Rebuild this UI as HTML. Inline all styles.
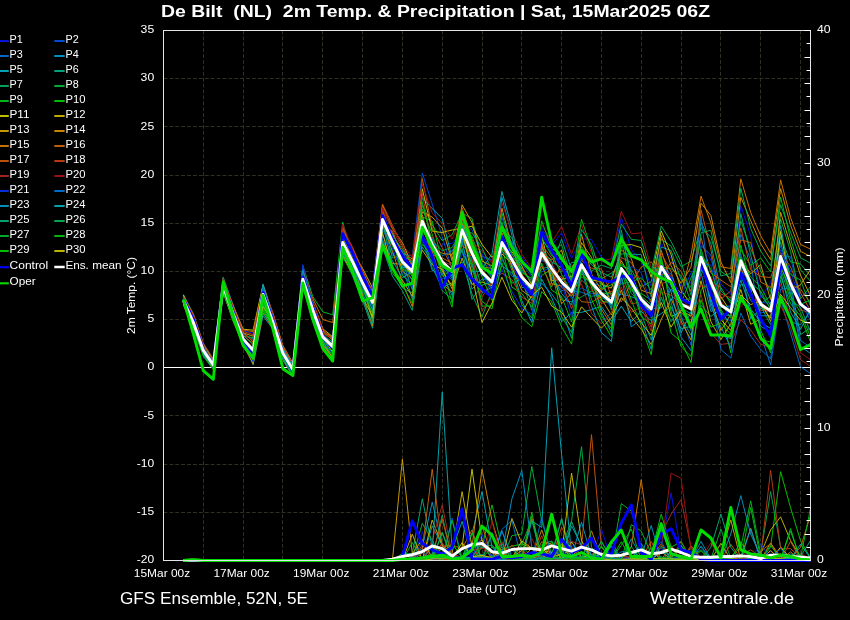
<!DOCTYPE html>
<html><head><meta charset="utf-8"><title>chart</title><style>html,body{margin:0;padding:0;background:#000;}svg{display:block}text{font-family:"Liberation Sans",sans-serif;fill:#fff}</style></head><body><div style="will-change:transform;width:850px;height:620px">
<svg width="850" height="620" viewBox="0 0 850 620">
<rect width="850" height="620" fill="#000"/>
<g stroke="#303022" stroke-width="1" stroke-dasharray="3.9,2" fill="none"><line x1="203.5" y1="30.5" x2="203.5" y2="560.5"/><line x1="243.5" y1="30.5" x2="243.5" y2="560.5"/><line x1="282.5" y1="30.5" x2="282.5" y2="560.5"/><line x1="322.5" y1="30.5" x2="322.5" y2="560.5"/><line x1="362.5" y1="30.5" x2="362.5" y2="560.5"/><line x1="402.5" y1="30.5" x2="402.5" y2="560.5"/><line x1="442.5" y1="30.5" x2="442.5" y2="560.5"/><line x1="482.5" y1="30.5" x2="482.5" y2="560.5"/><line x1="521.5" y1="30.5" x2="521.5" y2="560.5"/><line x1="561.5" y1="30.5" x2="561.5" y2="560.5"/><line x1="601.5" y1="30.5" x2="601.5" y2="560.5"/><line x1="641.5" y1="30.5" x2="641.5" y2="560.5"/><line x1="681.5" y1="30.5" x2="681.5" y2="560.5"/><line x1="720.5" y1="30.5" x2="720.5" y2="560.5"/><line x1="760.5" y1="30.5" x2="760.5" y2="560.5"/><line x1="800.5" y1="30.5" x2="800.5" y2="560.5"/><line x1="163.5" y1="512.5" x2="810.5" y2="512.5"/><line x1="163.5" y1="464.5" x2="810.5" y2="464.5"/><line x1="163.5" y1="415.5" x2="810.5" y2="415.5"/><line x1="163.5" y1="319.5" x2="810.5" y2="319.5"/><line x1="163.5" y1="271.5" x2="810.5" y2="271.5"/><line x1="163.5" y1="223.5" x2="810.5" y2="223.5"/><line x1="163.5" y1="175.5" x2="810.5" y2="175.5"/><line x1="163.5" y1="126.5" x2="810.5" y2="126.5"/><line x1="163.5" y1="78.5" x2="810.5" y2="78.5"/></g>
<clipPath id="c"><rect x="163" y="30" width="648" height="532"/></clipPath>
<g clip-path="url(#c)" fill="none" stroke-linejoin="round" stroke-linecap="butt">
<polyline points="183.4,560.5 193.4,560.5 203.3,560.5 213.3,560.5 223.2,560.5 233.2,560.5 243.1,560.5 253.1,560.5 263.0,560.5 273.0,560.5 282.9,560.5 292.9,560.5 302.8,560.5 312.8,560.5 322.8,560.5 332.7,560.5 342.7,560.5 352.6,560.5 362.6,560.5 372.5,560.5 382.5,560.5 392.4,560.5 402.4,560.5 412.3,560.5 422.3,531.7 432.2,560.2 442.2,546.3 452.1,557.9 462.1,556.6 472.0,559.0 482.0,558.3 492.0,559.0 501.9,557.6 511.9,560.0 521.8,560.2 531.8,559.5 541.7,555.5 551.7,560.4 561.6,559.5 571.6,544.7 581.5,556.9 591.5,558.4 601.4,528.9 611.4,560.4 621.3,559.7 631.3,557.9 641.2,557.0 651.2,560.3 661.2,547.2 671.1,492.9 681.1,553.9 691.0,559.7 701.0,559.7 710.9,560.3 720.9,560.2 730.8,559.7 740.8,558.5 750.7,558.8 760.7,560.1 770.6,559.0 780.6,560.3 790.5,558.9 800.5,560.3 810.5,559.0" stroke="#0a14e6" stroke-width="0.95"/>
<polyline points="183.4,560.5 193.4,560.5 203.3,560.5 213.3,560.5 223.2,560.5 233.2,560.5 243.1,560.5 253.1,560.5 263.0,560.5 273.0,560.5 282.9,560.5 292.9,560.5 302.8,560.5 312.8,560.5 322.8,560.5 332.7,560.5 342.7,560.5 352.6,560.5 362.6,560.5 372.5,560.5 382.5,560.5 392.4,560.5 402.4,560.5 412.3,560.5 422.3,540.5 432.2,558.0 442.2,559.5 452.1,518.1 462.1,558.2 472.0,552.4 482.0,556.7 492.0,559.5 501.9,530.8 511.9,558.9 521.8,559.5 531.8,557.2 541.7,559.4 551.7,558.8 561.6,560.3 571.6,558.3 581.5,558.9 591.5,557.2 601.4,554.0 611.4,559.7 621.3,559.6 631.3,558.8 641.2,555.5 651.2,560.1 661.2,548.0 671.1,557.1 681.1,557.6 691.0,560.4 701.0,560.1 710.9,558.8 720.9,559.1 730.8,559.1 740.8,559.0 750.7,559.1 760.7,559.8 770.6,559.2 780.6,559.5 790.5,559.5 800.5,559.8 810.5,558.8" stroke="#0050dc" stroke-width="0.95"/>
<polyline points="183.4,560.5 193.4,560.5 203.3,560.5 213.3,560.5 223.2,560.5 233.2,560.5 243.1,560.5 253.1,560.5 263.0,560.5 273.0,560.5 282.9,560.5 292.9,560.5 302.8,560.5 312.8,560.5 322.8,560.5 332.7,560.5 342.7,560.5 352.6,560.5 362.6,560.5 372.5,560.5 382.5,560.5 392.4,560.5 402.4,560.5 412.3,560.5 422.3,559.8 432.2,543.6 442.2,559.5 452.1,553.5 462.1,560.5 472.0,557.3 482.0,559.2 492.0,557.5 501.9,529.4 511.9,520.5 521.8,560.3 531.8,558.4 541.7,557.6 551.7,551.3 561.6,560.5 571.6,558.2 581.5,557.3 591.5,558.0 601.4,558.4 611.4,558.9 621.3,560.2 631.3,560.4 641.2,560.0 651.2,551.8 661.2,541.6 671.1,558.8 681.1,559.7 691.0,558.6 701.0,559.2 710.9,560.3 720.9,558.9 730.8,560.2 740.8,559.9 750.7,560.0 760.7,558.9 770.6,550.8 780.6,559.6 790.5,559.8 800.5,560.4 810.5,558.8" stroke="#0070d0" stroke-width="0.95"/>
<polyline points="183.4,560.5 193.4,560.5 203.3,560.5 213.3,560.5 223.2,560.5 233.2,560.5 243.1,560.5 253.1,560.5 263.0,560.5 273.0,560.5 282.9,560.5 292.9,560.5 302.8,560.5 312.8,560.5 322.8,560.5 332.7,560.5 342.7,560.5 352.6,560.5 362.6,560.5 372.5,560.5 382.5,560.5 392.4,560.5 402.4,560.5 412.3,560.5 422.3,547.2 432.2,502.2 442.2,544.6 452.1,555.5 462.1,559.6 472.0,556.9 482.0,557.2 492.0,559.4 501.9,530.9 511.9,556.7 521.8,557.4 531.8,519.0 541.7,558.2 551.7,559.9 561.6,558.9 571.6,554.1 581.5,559.3 591.5,557.8 601.4,558.4 611.4,546.5 621.3,560.4 631.3,538.7 641.2,557.7 651.2,558.3 661.2,560.2 671.1,559.0 681.1,559.4 691.0,559.9 701.0,541.4 710.9,559.0 720.9,559.3 730.8,534.0 740.8,495.6 750.7,534.0 760.7,556.5 770.6,559.2 780.6,559.3 790.5,560.2 800.5,559.6 810.5,559.7" stroke="#0096c8" stroke-width="0.95"/>
<polyline points="183.4,560.5 193.4,560.5 203.3,560.5 213.3,560.5 223.2,560.5 233.2,560.5 243.1,560.5 253.1,560.5 263.0,560.5 273.0,560.5 282.9,560.5 292.9,560.5 302.8,560.5 312.8,560.5 322.8,560.5 332.7,560.5 342.7,560.5 352.6,560.5 362.6,560.5 372.5,560.5 382.5,560.5 392.4,560.5 402.4,560.5 412.3,560.5 422.3,560.5 432.2,525.8 442.2,545.5 452.1,556.8 462.1,557.7 472.0,534.0 482.0,491.6 492.0,547.2 501.9,557.2 511.9,549.1 521.8,559.6 531.8,521.0 541.7,527.4 551.7,347.8 561.6,454.5 571.6,553.9 581.5,560.1 591.5,557.6 601.4,541.7 611.4,558.2 621.3,557.2 631.3,557.9 641.2,556.7 651.2,554.5 661.2,529.5 671.1,554.9 681.1,556.6 691.0,559.4 701.0,558.4 710.9,559.2 720.9,559.3 730.8,557.4 740.8,559.2 750.7,558.8 760.7,559.4 770.6,559.2 780.6,560.1 790.5,559.8 800.5,553.8 810.5,559.6" stroke="#00aabe" stroke-width="0.95"/>
<polyline points="183.4,560.5 193.4,560.5 203.3,560.5 213.3,560.5 223.2,560.5 233.2,560.5 243.1,560.5 253.1,560.5 263.0,560.5 273.0,560.5 282.9,560.5 292.9,560.5 302.8,560.5 312.8,560.5 322.8,560.5 332.7,560.5 342.7,560.5 352.6,560.5 362.6,560.5 372.5,560.5 382.5,560.5 392.4,560.5 402.4,553.4 412.3,553.9 422.3,498.8 432.2,547.2 442.2,556.7 452.1,557.7 462.1,557.5 472.0,541.6 482.0,558.4 492.0,559.7 501.9,543.4 511.9,560.2 521.8,558.1 531.8,556.8 541.7,544.8 551.7,541.0 561.6,559.3 571.6,521.4 581.5,547.1 591.5,555.3 601.4,555.6 611.4,540.8 621.3,560.2 631.3,558.4 641.2,559.9 651.2,560.4 661.2,559.7 671.1,551.9 681.1,559.0 691.0,560.5 701.0,546.1 710.9,559.4 720.9,559.7 730.8,558.6 740.8,559.9 750.7,560.1 760.7,560.3 770.6,559.0 780.6,560.4 790.5,553.9 800.5,556.5 810.5,540.6" stroke="#00aa82" stroke-width="0.95"/>
<polyline points="183.4,560.5 193.4,560.5 203.3,560.5 213.3,560.5 223.2,560.5 233.2,560.5 243.1,560.5 253.1,560.5 263.0,560.5 273.0,560.5 282.9,560.5 292.9,560.5 302.8,560.5 312.8,560.5 322.8,560.5 332.7,560.5 342.7,560.5 352.6,560.5 362.6,560.5 372.5,560.5 382.5,560.5 392.4,560.5 402.4,560.1 412.3,560.5 422.3,560.5 432.2,558.7 442.2,515.0 452.1,559.3 462.1,556.9 472.0,548.3 482.0,556.9 492.0,558.4 501.9,547.0 511.9,557.3 521.8,558.6 531.8,558.2 541.7,557.4 551.7,559.7 561.6,557.6 571.6,557.9 581.5,558.4 591.5,554.8 601.4,559.9 611.4,558.9 621.3,559.7 631.3,557.2 641.2,560.0 651.2,547.7 661.2,560.4 671.1,559.4 681.1,559.0 691.0,557.7 701.0,558.7 710.9,559.8 720.9,556.9 730.8,559.5 740.8,560.0 750.7,559.4 760.7,553.9 770.6,491.6 780.6,547.2 790.5,558.8 800.5,558.8 810.5,559.9" stroke="#00aa5a" stroke-width="0.95"/>
<polyline points="183.4,560.5 193.4,560.5 203.3,560.5 213.3,560.5 223.2,560.5 233.2,560.5 243.1,560.5 253.1,560.5 263.0,560.5 273.0,560.5 282.9,560.5 292.9,560.5 302.8,560.5 312.8,560.5 322.8,560.5 332.7,560.5 342.7,560.5 352.6,560.5 362.6,560.5 372.5,560.5 382.5,560.5 392.4,560.5 402.4,560.5 412.3,558.6 422.3,523.3 432.2,540.2 442.2,559.3 452.1,556.7 462.1,558.3 472.0,560.4 482.0,559.1 492.0,559.2 501.9,559.7 511.9,535.6 521.8,534.0 531.8,466.4 541.7,520.8 551.7,553.9 561.6,518.9 571.6,559.2 581.5,560.3 591.5,550.0 601.4,557.2 611.4,558.8 621.3,545.5 631.3,529.0 641.2,560.2 651.2,560.1 661.2,559.8 671.1,558.6 681.1,559.6 691.0,558.7 701.0,559.6 710.9,559.0 720.9,529.1 730.8,558.9 740.8,560.0 750.7,559.4 760.7,559.2 770.6,558.5 780.6,559.3 790.5,558.7 800.5,560.1 810.5,559.4" stroke="#00b43c" stroke-width="0.95"/>
<polyline points="183.4,560.5 193.4,560.5 203.3,560.5 213.3,560.5 223.2,560.5 233.2,560.5 243.1,560.5 253.1,560.5 263.0,560.5 273.0,560.5 282.9,560.5 292.9,560.5 302.8,560.5 312.8,560.5 322.8,560.5 332.7,560.5 342.7,560.5 352.6,560.5 362.6,560.5 372.5,560.5 382.5,560.5 392.4,560.5 402.4,560.5 412.3,560.5 422.3,560.5 432.2,559.7 442.2,554.2 452.1,543.9 462.1,557.1 472.0,560.2 482.0,547.2 492.0,504.9 501.9,547.2 511.9,557.1 521.8,557.0 531.8,557.3 541.7,549.9 551.7,559.2 561.6,557.1 571.6,548.2 581.5,557.2 591.5,559.6 601.4,546.0 611.4,559.0 621.3,559.9 631.3,560.4 641.2,560.3 651.2,558.4 661.2,560.2 671.1,559.4 681.1,560.1 691.0,547.6 701.0,560.1 710.9,558.8 720.9,558.6 730.8,556.6 740.8,547.2 750.7,500.9 760.7,553.9 770.6,558.6 780.6,559.8 790.5,559.7 800.5,558.9 810.5,560.1" stroke="#00be1e" stroke-width="0.95"/>
<polyline points="183.4,560.5 193.4,560.5 203.3,560.5 213.3,560.5 223.2,560.5 233.2,560.5 243.1,560.5 253.1,560.5 263.0,560.5 273.0,560.5 282.9,560.5 292.9,560.5 302.8,560.5 312.8,560.5 322.8,560.5 332.7,560.5 342.7,560.5 352.6,560.5 362.6,560.5 372.5,560.5 382.5,560.5 392.4,560.5 402.4,560.5 412.3,560.5 422.3,559.8 432.2,560.2 442.2,533.1 452.1,559.9 462.1,559.4 472.0,559.8 482.0,558.2 492.0,546.9 501.9,549.6 511.9,546.1 521.8,544.1 531.8,558.8 541.7,558.9 551.7,541.6 561.6,559.2 571.6,557.2 581.5,560.3 591.5,558.0 601.4,560.1 611.4,557.6 621.3,558.9 631.3,560.4 641.2,560.0 651.2,558.7 661.2,558.6 671.1,558.6 681.1,559.5 691.0,558.7 701.0,559.4 710.9,559.0 720.9,560.1 730.8,559.8 740.8,557.1 750.7,559.5 760.7,560.2 770.6,547.2 780.6,471.7 790.5,507.5 800.5,540.6 810.5,557.9" stroke="#00c800" stroke-width="0.95"/>
<polyline points="183.4,560.5 193.4,560.5 203.3,560.5 213.3,560.5 223.2,560.5 233.2,560.5 243.1,560.5 253.1,560.5 263.0,560.5 273.0,560.5 282.9,560.5 292.9,560.5 302.8,560.5 312.8,560.5 322.8,560.5 332.7,560.5 342.7,560.5 352.6,560.5 362.6,560.5 372.5,560.5 382.5,560.5 392.4,560.5 402.4,560.5 412.3,560.5 422.3,560.2 432.2,546.1 442.2,557.4 452.1,557.6 462.1,547.2 472.0,469.1 482.0,540.6 492.0,552.8 501.9,558.0 511.9,557.4 521.8,550.4 531.8,558.1 541.7,554.9 551.7,559.6 561.6,560.1 571.6,541.9 581.5,556.6 591.5,556.6 601.4,558.9 611.4,559.5 621.3,559.6 631.3,557.7 641.2,546.9 651.2,559.7 661.2,551.8 671.1,559.3 681.1,559.8 691.0,553.0 701.0,558.8 710.9,560.0 720.9,559.8 730.8,558.8 740.8,559.8 750.7,559.7 760.7,560.3 770.6,560.0 780.6,547.1 790.5,558.6 800.5,558.9 810.5,560.2" stroke="#c8c800" stroke-width="0.95"/>
<polyline points="183.4,560.5 193.4,560.5 203.3,560.5 213.3,560.5 223.2,560.5 233.2,560.5 243.1,560.5 253.1,560.5 263.0,560.5 273.0,560.5 282.9,560.5 292.9,560.5 302.8,560.5 312.8,560.5 322.8,560.5 332.7,560.5 342.7,560.5 352.6,560.5 362.6,560.5 372.5,560.5 382.5,560.5 392.4,560.5 402.4,560.5 412.3,534.1 422.3,560.5 432.2,520.0 442.2,545.1 452.1,553.9 462.1,491.6 472.0,547.2 482.0,540.0 492.0,557.4 501.9,559.9 511.9,518.5 521.8,543.4 531.8,548.8 541.7,560.1 551.7,545.2 561.6,559.2 571.6,559.2 581.5,560.3 591.5,558.2 601.4,556.9 611.4,559.5 621.3,559.4 631.3,559.2 641.2,559.3 651.2,559.6 661.2,558.2 671.1,559.7 681.1,558.1 691.0,559.1 701.0,557.9 710.9,560.0 720.9,543.3 730.8,559.5 740.8,560.2 750.7,559.3 760.7,553.9 770.6,530.0 780.6,516.8 790.5,540.6 800.5,556.5 810.5,559.3" stroke="#c8b400" stroke-width="0.95"/>
<polyline points="183.4,560.5 193.4,560.5 203.3,560.5 213.3,560.5 223.2,560.5 233.2,560.5 243.1,560.5 253.1,560.5 263.0,560.5 273.0,560.5 282.9,560.5 292.9,560.5 302.8,560.5 312.8,560.5 322.8,560.5 332.7,560.5 342.7,560.5 352.6,560.5 362.6,560.5 372.5,560.5 382.5,560.5 392.4,560.5 402.4,459.1 412.3,553.9 422.3,539.3 432.2,557.9 442.2,558.2 452.1,557.4 462.1,557.5 472.0,558.2 482.0,556.8 492.0,557.8 501.9,559.4 511.9,558.5 521.8,560.3 531.8,547.6 541.7,550.2 551.7,552.5 561.6,544.4 571.6,560.0 581.5,556.5 591.5,559.0 601.4,559.5 611.4,558.3 621.3,559.5 631.3,559.9 641.2,557.3 651.2,560.3 661.2,559.4 671.1,559.5 681.1,559.6 691.0,560.0 701.0,560.0 710.9,560.0 720.9,555.2 730.8,519.8 740.8,560.3 750.7,559.2 760.7,559.6 770.6,550.6 780.6,559.8 790.5,559.6 800.5,559.1 810.5,558.9" stroke="#d2a000" stroke-width="0.95"/>
<polyline points="183.4,560.5 193.4,560.5 203.3,560.5 213.3,560.5 223.2,560.5 233.2,560.5 243.1,560.5 253.1,560.5 263.0,560.5 273.0,560.5 282.9,560.5 292.9,560.5 302.8,560.5 312.8,560.5 322.8,560.5 332.7,560.5 342.7,560.5 352.6,560.5 362.6,560.5 372.5,560.5 382.5,560.5 392.4,560.5 402.4,560.5 412.3,560.5 422.3,560.5 432.2,554.4 442.2,560.5 452.1,559.6 462.1,559.3 472.0,547.2 482.0,469.1 492.0,520.8 501.9,553.9 511.9,556.9 521.8,559.0 531.8,557.5 541.7,529.9 551.7,557.8 561.6,541.0 571.6,556.9 581.5,545.3 591.5,554.2 601.4,552.7 611.4,558.7 621.3,559.1 631.3,558.2 641.2,560.0 651.2,559.8 661.2,522.5 671.1,558.5 681.1,559.7 691.0,557.3 701.0,559.5 710.9,560.5 720.9,558.7 730.8,559.2 740.8,557.5 750.7,528.3 760.7,559.9 770.6,542.9 780.6,557.3 790.5,558.9 800.5,559.6 810.5,560.5" stroke="#d28c00" stroke-width="0.95"/>
<polyline points="183.4,560.5 193.4,560.5 203.3,560.5 213.3,560.5 223.2,560.5 233.2,560.5 243.1,560.5 253.1,560.5 263.0,560.5 273.0,560.5 282.9,560.5 292.9,560.5 302.8,560.5 312.8,560.5 322.8,560.5 332.7,560.5 342.7,560.5 352.6,560.5 362.6,560.5 372.5,560.5 382.5,560.5 392.4,560.5 402.4,560.5 412.3,560.5 422.3,552.8 432.2,557.6 442.2,559.5 452.1,558.1 462.1,559.9 472.0,559.6 482.0,525.1 492.0,557.7 501.9,549.8 511.9,559.4 521.8,556.7 531.8,560.1 541.7,541.8 551.7,544.0 561.6,560.1 571.6,560.2 581.5,559.8 591.5,530.8 601.4,557.6 611.4,558.7 621.3,559.5 631.3,547.2 641.2,479.7 651.2,549.9 661.2,560.1 671.1,559.2 681.1,560.4 691.0,559.8 701.0,559.8 710.9,559.9 720.9,559.7 730.8,559.8 740.8,559.0 750.7,559.2 760.7,559.9 770.6,559.3 780.6,560.3 790.5,551.9 800.5,559.9 810.5,560.4" stroke="#d27800" stroke-width="0.95"/>
<polyline points="183.4,560.5 193.4,560.5 203.3,560.5 213.3,560.5 223.2,560.5 233.2,560.5 243.1,560.5 253.1,560.5 263.0,560.5 273.0,560.5 282.9,560.5 292.9,560.5 302.8,560.5 312.8,560.5 322.8,560.5 332.7,560.5 342.7,560.5 352.6,560.5 362.6,560.5 372.5,560.5 382.5,560.5 392.4,560.5 402.4,560.5 412.3,560.5 422.3,549.9 432.2,469.1 442.2,547.2 452.1,545.0 462.1,548.7 472.0,529.9 482.0,559.9 492.0,557.8 501.9,559.0 511.9,559.3 521.8,559.3 531.8,559.3 541.7,558.2 551.7,557.9 561.6,559.4 571.6,559.2 581.5,556.8 591.5,559.5 601.4,560.1 611.4,557.2 621.3,559.3 631.3,560.1 641.2,558.4 651.2,556.8 661.2,543.9 671.1,559.8 681.1,559.0 691.0,558.9 701.0,559.7 710.9,560.5 720.9,558.5 730.8,559.7 740.8,558.8 750.7,558.7 760.7,551.2 770.6,543.7 780.6,559.3 790.5,557.9 800.5,547.2 810.5,515.5" stroke="#c86408" stroke-width="0.95"/>
<polyline points="183.4,560.5 193.4,560.5 203.3,560.5 213.3,560.5 223.2,560.5 233.2,560.5 243.1,560.5 253.1,560.5 263.0,560.5 273.0,560.5 282.9,560.5 292.9,560.5 302.8,560.5 312.8,560.5 322.8,560.5 332.7,560.5 342.7,560.5 352.6,560.5 362.6,560.5 372.5,560.5 382.5,560.5 392.4,560.5 402.4,560.5 412.3,556.6 422.3,560.5 432.2,556.7 442.2,518.9 452.1,558.1 462.1,557.3 472.0,549.1 482.0,558.7 492.0,556.9 501.9,556.7 511.9,559.6 521.8,557.4 531.8,516.2 541.7,558.1 551.7,557.9 561.6,544.8 571.6,552.8 581.5,547.2 591.5,434.6 601.4,547.2 611.4,558.7 621.3,556.7 631.3,556.7 641.2,558.5 651.2,541.6 661.2,559.8 671.1,545.8 681.1,560.1 691.0,545.7 701.0,558.5 710.9,558.5 720.9,559.7 730.8,544.2 740.8,558.8 750.7,557.3 760.7,559.7 770.6,560.3 780.6,559.7 790.5,541.5 800.5,559.4 810.5,558.8" stroke="#c8560c" stroke-width="0.95"/>
<polyline points="183.4,560.5 193.4,560.5 203.3,560.5 213.3,560.5 223.2,560.5 233.2,560.5 243.1,560.5 253.1,560.5 263.0,560.5 273.0,560.5 282.9,560.5 292.9,560.5 302.8,560.5 312.8,560.5 322.8,560.5 332.7,560.5 342.7,560.5 352.6,560.5 362.6,560.5 372.5,560.5 382.5,560.5 392.4,560.5 402.4,560.5 412.3,560.5 422.3,544.6 432.2,560.3 442.2,542.5 452.1,556.8 462.1,557.3 472.0,551.0 482.0,548.0 492.0,550.2 501.9,558.4 511.9,544.9 521.8,556.6 531.8,560.2 541.7,535.7 551.7,559.0 561.6,527.3 571.6,547.0 581.5,558.0 591.5,558.6 601.4,556.8 611.4,559.1 621.3,559.6 631.3,558.4 641.2,558.7 651.2,560.2 661.2,558.8 671.1,559.5 681.1,541.4 691.0,559.2 701.0,559.8 710.9,559.2 720.9,560.2 730.8,560.2 740.8,554.7 750.7,549.9 760.7,556.5 770.6,470.4 780.6,548.6 790.5,548.6 800.5,557.9 810.5,559.7" stroke="#be3c14" stroke-width="0.95"/>
<polyline points="183.4,560.5 193.4,560.5 203.3,560.5 213.3,560.5 223.2,560.5 233.2,560.5 243.1,560.5 253.1,560.5 263.0,560.5 273.0,560.5 282.9,560.5 292.9,560.5 302.8,560.5 312.8,560.5 322.8,560.5 332.7,560.5 342.7,560.5 352.6,560.5 362.6,560.5 372.5,560.5 382.5,560.5 392.4,560.5 402.4,560.5 412.3,560.5 422.3,560.5 432.2,540.6 442.2,504.9 452.1,553.9 462.1,557.4 472.0,558.1 482.0,545.2 492.0,558.4 501.9,541.7 511.9,557.4 521.8,559.8 531.8,556.6 541.7,557.0 551.7,560.5 561.6,545.3 571.6,541.4 581.5,544.8 591.5,560.0 601.4,558.3 611.4,555.4 621.3,560.5 631.3,558.6 641.2,558.8 651.2,559.8 661.2,534.0 671.1,514.1 681.1,499.6 691.0,547.2 701.0,558.8 710.9,559.5 720.9,560.5 730.8,560.1 740.8,559.6 750.7,558.6 760.7,558.9 770.6,559.6 780.6,560.1 790.5,559.2 800.5,557.7 810.5,559.8" stroke="#aa281e" stroke-width="0.95"/>
<polyline points="183.4,560.5 193.4,560.5 203.3,560.5 213.3,560.5 223.2,560.5 233.2,560.5 243.1,560.5 253.1,560.5 263.0,560.5 273.0,560.5 282.9,560.5 292.9,560.5 302.8,560.5 312.8,560.5 322.8,560.5 332.7,560.5 342.7,560.5 352.6,560.5 362.6,560.5 372.5,560.5 382.5,560.5 392.4,560.5 402.4,560.5 412.3,560.5 422.3,560.5 432.2,559.6 442.2,558.7 452.1,560.3 462.1,559.8 472.0,557.5 482.0,559.4 492.0,521.7 501.9,560.4 511.9,559.5 521.8,558.5 531.8,538.3 541.7,558.7 551.7,559.8 561.6,558.4 571.6,558.8 581.5,560.4 591.5,556.9 601.4,557.9 611.4,559.0 621.3,558.0 631.3,556.7 641.2,559.0 651.2,559.2 661.2,547.2 671.1,473.1 681.1,478.4 691.0,549.9 701.0,558.8 710.9,542.9 720.9,558.7 730.8,559.7 740.8,558.9 750.7,559.5 760.7,560.4 770.6,558.4 780.6,557.5 790.5,560.3 800.5,553.5 810.5,558.7" stroke="#a01414" stroke-width="0.95"/>
<polyline points="183.4,560.5 193.4,560.5 203.3,560.5 213.3,560.5 223.2,560.5 233.2,560.5 243.1,560.5 253.1,560.5 263.0,560.5 273.0,560.5 282.9,560.5 292.9,560.5 302.8,560.5 312.8,560.5 322.8,560.5 332.7,560.5 342.7,560.5 352.6,560.5 362.6,560.5 372.5,560.5 382.5,560.5 392.4,560.5 402.4,560.5 412.3,560.5 422.3,551.7 432.2,559.2 442.2,558.8 452.1,557.3 462.1,556.8 472.0,557.2 482.0,534.4 492.0,558.2 501.9,559.6 511.9,557.8 521.8,559.5 531.8,559.6 541.7,557.6 551.7,558.4 561.6,551.1 571.6,557.7 581.5,557.2 591.5,560.1 601.4,559.5 611.4,559.4 621.3,557.6 631.3,558.5 641.2,554.8 651.2,557.0 661.2,560.4 671.1,558.6 681.1,559.4 691.0,557.6 701.0,560.1 710.9,559.0 720.9,560.3 730.8,560.1 740.8,559.4 750.7,559.4 760.7,543.6 770.6,559.3 780.6,559.9 790.5,558.7 800.5,559.9 810.5,559.8" stroke="#0032e6" stroke-width="0.95"/>
<polyline points="183.4,560.5 193.4,560.5 203.3,560.5 213.3,560.5 223.2,560.5 233.2,560.5 243.1,560.5 253.1,560.5 263.0,560.5 273.0,560.5 282.9,560.5 292.9,560.5 302.8,560.5 312.8,560.5 322.8,560.5 332.7,560.5 342.7,560.5 352.6,560.5 362.6,560.5 372.5,560.5 382.5,560.5 392.4,560.5 402.4,560.5 412.3,560.5 422.3,560.5 432.2,558.2 442.2,557.2 452.1,556.9 462.1,559.9 472.0,558.6 482.0,560.2 492.0,532.4 501.9,557.0 511.9,556.8 521.8,559.8 531.8,560.1 541.7,517.1 551.7,557.6 561.6,545.3 571.6,556.9 581.5,557.3 591.5,557.3 601.4,556.7 611.4,557.5 621.3,559.9 631.3,558.4 641.2,558.9 651.2,559.9 661.2,558.6 671.1,558.7 681.1,558.8 691.0,557.0 701.0,547.0 710.9,559.7 720.9,560.5 730.8,559.9 740.8,560.3 750.7,559.7 760.7,559.0 770.6,558.6 780.6,548.5 790.5,560.0 800.5,560.3 810.5,559.5" stroke="#0070d0" stroke-width="0.95"/>
<polyline points="183.4,560.5 193.4,560.5 203.3,560.5 213.3,560.5 223.2,560.5 233.2,560.5 243.1,560.5 253.1,560.5 263.0,560.5 273.0,560.5 282.9,560.5 292.9,560.5 302.8,560.5 312.8,560.5 322.8,560.5 332.7,560.5 342.7,560.5 352.6,560.5 362.6,560.5 372.5,560.5 382.5,560.5 392.4,560.5 402.4,560.5 412.3,560.5 422.3,560.5 432.2,559.1 442.2,553.4 452.1,557.7 462.1,557.6 472.0,557.4 482.0,557.3 492.0,557.2 501.9,553.9 511.9,498.8 521.8,470.4 531.8,547.2 541.7,559.9 551.7,557.6 561.6,559.2 571.6,557.4 581.5,522.0 591.5,556.7 601.4,557.1 611.4,558.9 621.3,551.7 631.3,551.9 641.2,557.0 651.2,525.5 661.2,560.0 671.1,560.3 681.1,559.1 691.0,556.8 701.0,560.4 710.9,559.0 720.9,559.4 730.8,559.8 740.8,559.4 750.7,528.9 760.7,559.3 770.6,558.8 780.6,559.4 790.5,556.8 800.5,558.9 810.5,558.8" stroke="#0096c8" stroke-width="0.95"/>
<polyline points="183.4,560.5 193.4,560.5 203.3,560.5 213.3,560.5 223.2,560.5 233.2,560.5 243.1,560.5 253.1,560.5 263.0,560.5 273.0,560.5 282.9,560.5 292.9,560.5 302.8,560.5 312.8,560.5 322.8,560.5 332.7,560.5 342.7,560.5 352.6,560.5 362.6,560.5 372.5,560.5 382.5,560.5 392.4,560.5 402.4,560.5 412.3,557.1 422.3,560.5 432.2,553.9 442.2,392.2 452.1,549.9 462.1,521.3 472.0,557.2 482.0,554.5 492.0,559.2 501.9,559.9 511.9,557.8 521.8,557.0 531.8,560.1 541.7,558.3 551.7,558.7 561.6,558.9 571.6,525.9 581.5,545.5 591.5,558.6 601.4,560.5 611.4,559.5 621.3,559.6 631.3,558.9 641.2,558.9 651.2,559.0 661.2,551.1 671.1,558.9 681.1,558.9 691.0,558.9 701.0,556.9 710.9,560.1 720.9,558.7 730.8,559.9 740.8,559.8 750.7,558.6 760.7,558.7 770.6,559.4 780.6,559.8 790.5,559.5 800.5,544.2 810.5,558.3" stroke="#00aab4" stroke-width="0.95"/>
<polyline points="183.4,560.5 193.4,560.5 203.3,560.5 213.3,560.5 223.2,560.5 233.2,560.5 243.1,560.5 253.1,560.5 263.0,560.5 273.0,560.5 282.9,560.5 292.9,560.5 302.8,560.5 312.8,560.5 322.8,560.5 332.7,560.5 342.7,560.5 352.6,560.5 362.6,560.5 372.5,560.5 382.5,560.5 392.4,560.5 402.4,560.5 412.3,560.5 422.3,560.5 432.2,559.3 442.2,531.9 452.1,557.4 462.1,558.5 472.0,543.8 482.0,547.7 492.0,544.8 501.9,557.8 511.9,558.2 521.8,558.8 531.8,560.0 541.7,557.6 551.7,556.6 561.6,518.3 571.6,557.3 581.5,557.7 591.5,537.3 601.4,557.4 611.4,545.6 621.3,560.3 631.3,560.5 641.2,543.4 651.2,560.4 661.2,559.5 671.1,559.3 681.1,559.3 691.0,558.6 701.0,559.2 710.9,547.2 720.9,514.1 730.8,547.2 740.8,560.4 750.7,558.6 760.7,560.3 770.6,559.4 780.6,558.4 790.5,558.7 800.5,558.7 810.5,559.4" stroke="#00aa78" stroke-width="0.95"/>
<polyline points="183.4,560.5 193.4,560.5 203.3,560.5 213.3,560.5 223.2,560.5 233.2,560.5 243.1,560.5 253.1,560.5 263.0,560.5 273.0,560.5 282.9,560.5 292.9,560.5 302.8,560.5 312.8,560.5 322.8,560.5 332.7,560.5 342.7,560.5 352.6,560.5 362.6,560.5 372.5,560.5 382.5,560.5 392.4,560.5 402.4,560.5 412.3,560.5 422.3,560.5 432.2,557.9 442.2,557.1 452.1,558.1 462.1,558.2 472.0,558.2 482.0,542.2 492.0,559.4 501.9,556.1 511.9,559.8 521.8,544.3 531.8,519.7 541.7,559.9 551.7,559.0 561.6,547.2 571.6,520.8 581.5,446.6 591.5,547.2 601.4,557.6 611.4,559.1 621.3,558.7 631.3,546.5 641.2,559.6 651.2,556.8 661.2,546.3 671.1,558.7 681.1,545.7 691.0,557.5 701.0,549.8 710.9,558.7 720.9,558.8 730.8,560.0 740.8,559.5 750.7,559.2 760.7,560.0 770.6,559.6 780.6,558.6 790.5,559.9 800.5,554.6 810.5,559.1" stroke="#00af50" stroke-width="0.95"/>
<polyline points="183.4,560.5 193.4,560.5 203.3,560.5 213.3,560.5 223.2,560.5 233.2,560.5 243.1,560.5 253.1,560.5 263.0,560.5 273.0,560.5 282.9,560.5 292.9,560.5 302.8,560.5 312.8,560.5 322.8,560.5 332.7,560.5 342.7,560.5 352.6,560.5 362.6,560.5 372.5,560.5 382.5,560.5 392.4,560.5 402.4,560.5 412.3,560.5 422.3,560.5 432.2,556.8 442.2,560.2 452.1,520.2 462.1,560.3 472.0,557.7 482.0,560.4 492.0,533.5 501.9,558.2 511.9,559.3 521.8,559.5 531.8,558.5 541.7,551.4 551.7,560.2 561.6,553.1 571.6,558.6 581.5,556.5 591.5,560.4 601.4,541.0 611.4,560.3 621.3,503.6 631.3,511.1 641.2,546.7 651.2,558.9 661.2,558.7 671.1,557.0 681.1,545.4 691.0,560.5 701.0,559.1 710.9,558.8 720.9,559.7 730.8,558.7 740.8,560.1 750.7,560.3 760.7,560.3 770.6,545.3 780.6,559.7 790.5,531.1 800.5,559.1 810.5,559.1" stroke="#00b432" stroke-width="0.95"/>
<polyline points="183.4,560.5 193.4,560.5 203.3,560.5 213.3,560.5 223.2,560.5 233.2,560.5 243.1,560.5 253.1,560.5 263.0,560.5 273.0,560.5 282.9,560.5 292.9,560.5 302.8,560.5 312.8,560.5 322.8,560.5 332.7,560.5 342.7,560.5 352.6,560.5 362.6,560.5 372.5,560.5 382.5,560.5 392.4,560.5 402.4,560.5 412.3,542.6 422.3,560.5 432.2,556.6 442.2,558.0 452.1,543.4 462.1,557.7 472.0,532.9 482.0,560.5 492.0,556.8 501.9,557.4 511.9,559.0 521.8,558.7 531.8,512.3 541.7,559.2 551.7,557.7 561.6,558.4 571.6,559.4 581.5,559.0 591.5,559.2 601.4,558.6 611.4,553.6 621.3,560.3 631.3,524.7 641.2,531.1 651.2,553.9 661.2,514.1 671.1,547.2 681.1,541.6 691.0,559.4 701.0,550.8 710.9,560.4 720.9,559.1 730.8,559.1 740.8,559.9 750.7,507.3 760.7,558.6 770.6,558.6 780.6,560.3 790.5,560.5 800.5,558.1 810.5,508.4" stroke="#00be14" stroke-width="0.95"/>
<polyline points="183.4,560.5 193.4,560.5 203.3,560.5 213.3,560.5 223.2,560.5 233.2,560.5 243.1,560.5 253.1,560.5 263.0,560.5 273.0,560.5 282.9,560.5 292.9,560.5 302.8,560.5 312.8,560.5 322.8,560.5 332.7,560.5 342.7,560.5 352.6,560.5 362.6,560.5 372.5,560.5 382.5,560.5 392.4,560.5 402.4,560.5 412.3,560.5 422.3,557.2 432.2,554.3 442.2,549.1 452.1,560.4 462.1,559.2 472.0,559.0 482.0,560.5 492.0,557.7 501.9,557.4 511.9,557.0 521.8,557.7 531.8,556.6 541.7,551.9 551.7,558.9 561.6,542.3 571.6,559.4 581.5,557.6 591.5,559.9 601.4,547.0 611.4,558.2 621.3,541.8 631.3,558.6 641.2,558.4 651.2,560.2 661.2,556.9 671.1,559.4 681.1,558.8 691.0,558.4 701.0,559.2 710.9,559.1 720.9,560.2 730.8,559.1 740.8,541.7 750.7,559.5 760.7,558.8 770.6,560.4 780.6,560.2 790.5,528.5 800.5,560.2 810.5,556.7" stroke="#00c800" stroke-width="0.95"/>
<polyline points="183.4,560.5 193.4,560.5 203.3,560.5 213.3,560.5 223.2,560.5 233.2,560.5 243.1,560.5 253.1,560.5 263.0,560.5 273.0,560.5 282.9,560.5 292.9,560.5 302.8,560.5 312.8,560.5 322.8,560.5 332.7,560.5 342.7,560.5 352.6,560.5 362.6,560.5 372.5,560.5 382.5,560.5 392.4,560.5 402.4,560.5 412.3,560.5 422.3,560.5 432.2,559.0 442.2,558.7 452.1,559.1 462.1,542.6 472.0,556.9 482.0,555.4 492.0,557.6 501.9,557.5 511.9,558.4 521.8,540.9 531.8,548.1 541.7,548.0 551.7,557.2 561.6,553.9 571.6,473.1 581.5,540.6 591.5,559.1 601.4,558.9 611.4,559.9 621.3,560.1 631.3,558.8 641.2,559.2 651.2,558.6 661.2,558.8 671.1,558.9 681.1,559.3 691.0,558.6 701.0,559.7 710.9,559.9 720.9,560.2 730.8,559.0 740.8,559.5 750.7,560.3 760.7,558.2 770.6,558.7 780.6,558.6 790.5,560.2 800.5,560.4 810.5,559.2" stroke="#c8be00" stroke-width="0.95"/>
<polyline points="183.4,560.5 193.4,560.5 203.3,560.5 213.3,560.5 223.2,560.5 233.2,560.5 243.1,560.5 253.1,560.5 263.0,560.5 273.0,560.5 282.9,560.5 292.9,560.5 302.8,560.5 312.8,560.5 322.8,560.5 332.7,560.5 342.7,560.5 352.6,560.5 362.6,560.5 372.5,560.5 382.5,560.5 392.4,560.5 402.4,556.5 412.3,520.8 422.3,543.3 432.2,549.9 442.2,553.9 452.1,547.2 462.1,508.8 472.0,559.2 482.0,559.2 492.0,559.2 501.9,556.5 511.9,557.9 521.8,556.5 531.8,552.5 541.7,553.9 551.7,556.5 561.6,539.3 571.6,552.5 581.5,548.6 591.5,538.0 601.4,556.5 611.4,553.9 621.3,523.4 631.3,504.9 641.2,552.5 651.2,559.2 661.2,534.0 671.1,528.7 681.1,549.9 691.0,552.5 701.0,559.2 710.9,560.5 720.9,560.5 730.8,560.5 740.8,560.5 750.7,560.5 760.7,560.5 770.6,560.5 780.6,560.5 790.5,560.5 800.5,560.5 810.5,560.5" stroke="#0000ff" stroke-width="2.9"/>
<polyline points="183.4,560.5 193.4,560.2 203.3,560.4 213.3,560.5 223.2,560.5 233.2,560.5 243.1,560.5 253.1,560.5 263.0,560.5 273.0,560.5 282.9,560.5 292.9,560.5 302.8,560.5 312.8,560.5 322.8,560.5 332.7,560.5 342.7,560.5 352.6,560.5 362.6,560.5 372.5,560.5 382.5,560.5 392.4,559.2 402.4,556.5 412.3,554.7 422.3,551.6 432.2,545.9 442.2,548.6 452.1,556.1 462.1,548.6 472.0,544.6 482.0,543.5 492.0,551.6 501.9,553.2 511.9,549.5 521.8,548.6 531.8,548.6 541.7,549.9 551.7,545.9 561.6,548.6 571.6,551.2 581.5,547.2 591.5,549.9 601.4,554.5 611.4,555.9 621.3,555.2 631.3,552.5 641.2,549.9 651.2,553.9 661.2,552.5 671.1,549.2 681.1,552.5 691.0,556.5 701.0,557.2 710.9,557.2 720.9,556.5 730.8,556.5 740.8,555.9 750.7,556.5 760.7,558.5 770.6,555.2 780.6,555.2 790.5,556.5 800.5,557.2 810.5,557.9" stroke="#ffffff" stroke-width="2.9"/>
<polyline points="183.4,560.5 193.4,559.6 203.3,560.5 213.3,560.5 223.2,560.5 233.2,560.5 243.1,560.5 253.1,560.5 263.0,560.5 273.0,560.5 282.9,560.5 292.9,560.5 302.8,560.5 312.8,560.5 322.8,560.5 332.7,560.5 342.7,560.5 352.6,560.5 362.6,560.5 372.5,560.5 382.5,560.5 392.4,560.5 402.4,559.2 412.3,559.2 422.3,557.9 432.2,556.5 442.2,555.2 452.1,559.2 462.1,557.9 472.0,549.9 482.0,526.0 492.0,535.3 501.9,556.5 511.9,556.5 521.8,555.2 531.8,556.5 541.7,552.5 551.7,514.1 561.6,555.2 571.6,556.5 581.5,552.5 591.5,557.9 601.4,559.2 611.4,542.0 621.3,530.0 631.3,556.5 641.2,556.5 651.2,556.5 661.2,523.8 671.1,553.9 681.1,556.5 691.0,559.2 701.0,530.0 710.9,538.0 720.9,557.9 730.8,507.5 740.8,549.9 750.7,553.9 760.7,555.2 770.6,557.9 780.6,555.2 790.5,556.5 800.5,559.2 810.5,559.8" stroke="#00dc00" stroke-width="2.9"/>
<line x1="162.5" y1="367.5" x2="810.5" y2="367.5" stroke="#fff" stroke-width="1.2"/>
<polyline points="183.4,299.8 193.4,317.7 203.3,342.7 213.3,359.5 223.2,289.6 233.2,310.8 243.1,330.7 253.1,333.2 263.0,290.9 273.0,317.1 282.9,347.9 292.9,364.0 302.8,277.0 312.8,310.2 322.8,333.6 332.7,343.4 342.7,243.1 352.6,256.0 362.6,272.5 372.5,290.5 382.5,216.4 392.4,239.3 402.4,260.1 412.3,269.3 422.3,220.3 432.2,252.9 442.2,244.3 452.1,243.5 462.1,231.6 472.0,250.0 482.0,253.5 492.0,272.9 501.9,237.9 511.9,255.5 521.8,256.7 531.8,270.7 541.7,228.0 551.7,245.5 561.6,232.9 571.6,258.4 581.5,238.5 591.5,239.6 601.4,257.0 611.4,263.8 621.3,217.7 631.3,249.5 641.2,260.9 651.2,286.0 661.2,243.2 671.1,258.6 681.1,287.1 691.0,282.7 701.0,241.8 710.9,260.3 720.9,284.0 730.8,294.4 740.8,205.6 750.7,235.7 760.7,298.1 770.6,282.7 780.6,246.0 790.5,283.6 800.5,296.0 810.5,291.5" stroke="#0a14e6" stroke-width="0.95"/>
<polyline points="183.4,301.0 193.4,321.2 203.3,351.6 213.3,368.3 223.2,290.6 233.2,319.2 243.1,344.1 253.1,352.5 263.0,288.6 273.0,318.5 282.9,358.0 292.9,375.4 302.8,286.5 312.8,318.1 322.8,342.3 332.7,353.1 342.7,249.3 352.6,268.6 362.6,288.6 372.5,307.3 382.5,219.6 392.4,232.5 402.4,254.1 412.3,256.0 422.3,173.1 432.2,204.0 442.2,236.7 452.1,269.3 462.1,219.9 472.0,229.7 482.0,256.2 492.0,260.3 501.9,217.6 511.9,244.4 521.8,263.8 531.8,276.7 541.7,260.5 551.7,265.0 561.6,282.2 571.6,298.8 581.5,287.9 591.5,293.6 601.4,294.4 611.4,307.6 621.3,273.7 631.3,288.1 641.2,309.1 651.2,308.0 661.2,271.3 671.1,286.6 681.1,315.0 691.0,345.1 701.0,252.0 710.9,284.6 720.9,316.5 730.8,320.8 740.8,253.5 750.7,293.6 760.7,312.9 770.6,311.1 780.6,254.9 790.5,256.8 800.5,302.9 810.5,320.3" stroke="#0050dc" stroke-width="0.95"/>
<polyline points="183.4,301.6 193.4,321.8 203.3,344.5 213.3,362.1 223.2,285.1 233.2,310.2 243.1,336.8 253.1,349.9 263.0,296.3 273.0,326.2 282.9,355.6 292.9,370.7 302.8,285.2 312.8,314.6 322.8,344.4 332.7,355.0 342.7,254.2 352.6,271.0 362.6,281.0 372.5,302.1 382.5,234.8 392.4,255.3 402.4,259.1 412.3,281.5 422.3,235.4 432.2,249.4 442.2,267.3 452.1,280.5 462.1,242.8 472.0,279.8 482.0,272.5 492.0,288.9 501.9,259.4 511.9,276.2 521.8,277.3 531.8,293.1 541.7,251.5 551.7,278.1 561.6,290.6 571.6,289.8 581.5,271.2 591.5,281.9 601.4,286.5 611.4,298.4 621.3,270.4 631.3,282.2 641.2,297.9 651.2,310.0 661.2,265.7 671.1,281.2 681.1,306.3 691.0,330.6 701.0,245.7 710.9,255.2 720.9,306.1 730.8,311.0 740.8,234.1 750.7,260.4 760.7,334.7 770.6,364.9 780.6,299.6 790.5,333.1 800.5,366.8 810.5,373.6" stroke="#0070d0" stroke-width="0.95"/>
<polyline points="183.4,295.8 193.4,316.4 203.3,348.3 213.3,360.8 223.2,277.8 233.2,305.1 243.1,333.5 253.1,339.2 263.0,286.3 273.0,316.4 282.9,351.2 292.9,368.3 302.8,269.0 312.8,304.6 322.8,334.9 332.7,342.6 342.7,226.1 352.6,259.0 362.6,292.6 372.5,304.5 382.5,215.4 392.4,238.4 402.4,265.7 412.3,299.6 422.3,238.0 432.2,270.4 442.2,273.4 452.1,295.5 462.1,240.3 472.0,289.0 482.0,279.2 492.0,279.5 501.9,197.3 511.9,235.1 521.8,287.5 531.8,287.4 541.7,252.4 551.7,268.0 561.6,280.8 571.6,262.4 581.5,262.4 591.5,281.1 601.4,291.7 611.4,302.1 621.3,293.9 631.3,296.6 641.2,300.9 651.2,308.8 661.2,307.8 671.1,289.0 681.1,302.0 691.0,310.1 701.0,273.0 710.9,311.5 720.9,307.4 730.8,305.9 740.8,266.1 750.7,279.9 760.7,315.8 770.6,315.7 780.6,280.2 790.5,322.0 800.5,324.6 810.5,311.7" stroke="#0096c8" stroke-width="0.95"/>
<polyline points="183.4,295.4 193.4,320.1 203.3,350.9 213.3,365.9 223.2,281.0 233.2,312.6 243.1,340.7 253.1,364.9 263.0,315.7 273.0,329.2 282.9,358.5 292.9,373.9 302.8,276.1 312.8,310.7 322.8,340.3 332.7,359.0 342.7,231.3 352.6,263.0 362.6,294.0 372.5,312.6 382.5,214.4 392.4,252.8 402.4,267.4 412.3,266.4 422.3,197.8 432.2,208.6 442.2,218.4 452.1,257.9 462.1,251.4 472.0,271.8 482.0,271.0 492.0,282.6 501.9,245.6 511.9,265.4 521.8,300.6 531.8,322.4 541.7,279.1 551.7,297.7 561.6,321.7 571.6,312.8 581.5,312.3 591.5,309.7 601.4,306.3 611.4,321.3 621.3,306.1 631.3,321.7 641.2,311.4 651.2,320.7 661.2,313.5 671.1,306.9 681.1,328.7 691.0,326.4 701.0,257.6 710.9,302.6 720.9,335.0 730.8,338.6 740.8,263.8 750.7,318.9 760.7,308.2 770.6,312.1 780.6,225.6 790.5,280.1 800.5,305.5 810.5,312.1" stroke="#00aabe" stroke-width="0.95"/>
<polyline points="183.4,300.4 193.4,325.3 203.3,355.3 213.3,366.9 223.2,288.2 233.2,318.6 243.1,343.1 253.1,362.7 263.0,297.6 273.0,323.0 282.9,355.2 292.9,374.4 302.8,279.3 312.8,316.7 322.8,346.6 332.7,360.1 342.7,253.0 352.6,276.2 362.6,300.3 372.5,328.3 382.5,247.3 392.4,276.2 402.4,290.7 412.3,310.4 422.3,246.9 432.2,262.0 442.2,290.7 452.1,299.1 462.1,230.6 472.0,255.4 482.0,274.9 492.0,284.4 501.9,242.6 511.9,259.7 521.8,276.7 531.8,287.7 541.7,268.6 551.7,266.2 561.6,239.0 571.6,269.9 581.5,249.9 591.5,264.9 601.4,272.4 611.4,277.2 621.3,253.9 631.3,254.2 641.2,254.5 651.2,296.9 661.2,246.9 671.1,250.6 681.1,279.7 691.0,287.2 701.0,222.1 710.9,243.6 720.9,291.0 730.8,300.8 740.8,213.5 750.7,254.9 760.7,294.8 770.6,308.0 780.6,241.7 790.5,283.2 800.5,334.7 810.5,327.6" stroke="#00aa82" stroke-width="0.95"/>
<polyline points="183.4,294.5 193.4,313.8 203.3,343.9 213.3,361.2 223.2,277.2 233.2,307.1 243.1,337.5 253.1,351.6 263.0,293.0 273.0,321.1 282.9,354.7 292.9,373.4 302.8,280.9 312.8,312.0 322.8,343.0 332.7,346.9 342.7,248.2 352.6,263.7 362.6,289.9 372.5,301.0 382.5,210.8 392.4,240.9 402.4,261.6 412.3,270.1 422.3,226.9 432.2,245.0 442.2,259.6 452.1,272.2 462.1,261.8 472.0,294.1 482.0,316.7 492.0,290.8 501.9,256.5 511.9,283.2 521.8,279.2 531.8,310.3 541.7,256.5 551.7,271.9 561.6,300.1 571.6,301.8 581.5,296.8 591.5,291.1 601.4,297.1 611.4,304.2 621.3,268.3 631.3,293.5 641.2,303.4 651.2,309.1 661.2,263.0 671.1,278.4 681.1,318.0 691.0,335.1 701.0,305.1 710.9,316.4 720.9,309.1 730.8,327.0 740.8,284.5 750.7,286.1 760.7,303.9 770.6,296.1 780.6,236.9 790.5,261.9 800.5,263.9 810.5,275.7" stroke="#00aa5a" stroke-width="0.95"/>
<polyline points="183.4,300.2 193.4,319.5 203.3,350.2 213.3,363.7 223.2,291.1 233.2,316.5 243.1,336.2 253.1,337.7 263.0,291.6 273.0,319.8 282.9,352.7 292.9,367.8 302.8,274.1 312.8,307.3 322.8,332.9 332.7,339.3 342.7,237.3 352.6,252.6 362.6,276.1 372.5,294.2 382.5,219.2 392.4,258.0 402.4,255.5 412.3,261.6 422.3,205.6 432.2,224.7 442.2,240.6 452.1,234.7 462.1,213.1 472.0,218.4 482.0,258.8 492.0,274.9 501.9,225.9 511.9,238.4 521.8,259.2 531.8,274.8 541.7,240.1 551.7,251.0 561.6,244.6 571.6,279.4 581.5,246.4 591.5,261.3 601.4,278.8 611.4,273.0 621.3,265.6 631.3,269.7 641.2,286.6 651.2,281.7 661.2,239.3 671.1,246.2 681.1,266.6 691.0,261.2 701.0,227.6 710.9,237.2 720.9,271.4 730.8,278.2 740.8,220.9 750.7,248.9 760.7,270.8 770.6,292.1 780.6,219.1 790.5,251.3 800.5,298.8 810.5,286.6" stroke="#00b43c" stroke-width="0.95"/>
<polyline points="183.4,298.7 193.4,322.6 203.3,353.2 213.3,367.2 223.2,284.6 233.2,313.1 243.1,342.1 253.1,360.6 263.0,293.7 273.0,320.5 282.9,353.9 292.9,369.5 302.8,265.8 312.8,296.5 322.8,311.9 332.7,314.8 342.7,222.3 352.6,257.1 362.6,285.3 372.5,321.1 382.5,218.7 392.4,241.4 402.4,269.2 412.3,273.0 422.3,209.0 432.2,234.1 442.2,265.7 452.1,303.0 462.1,236.1 472.0,262.0 482.0,306.2 492.0,305.9 501.9,244.2 511.9,270.2 521.8,304.5 531.8,318.1 541.7,263.0 551.7,290.2 561.6,296.6 571.6,322.0 581.5,264.5 591.5,285.2 601.4,301.1 611.4,303.1 621.3,269.3 631.3,290.6 641.2,293.4 651.2,299.9 661.2,266.8 671.1,268.8 681.1,275.6 691.0,301.6 701.0,249.1 710.9,280.6 720.9,287.6 730.8,303.5 740.8,249.6 750.7,265.3 760.7,258.0 770.6,271.9 780.6,197.0 790.5,238.9 800.5,269.7 810.5,281.4" stroke="#00be1e" stroke-width="0.95"/>
<polyline points="183.4,300.7 193.4,327.7 203.3,353.6 213.3,367.9 223.2,290.1 233.2,320.4 243.1,340.3 253.1,357.4 263.0,307.9 273.0,327.2 282.9,357.1 292.9,372.5 302.8,282.1 312.8,313.3 322.8,340.9 332.7,349.4 342.7,246.2 352.6,266.5 362.6,281.7 372.5,305.8 382.5,213.2 392.4,236.2 402.4,262.0 412.3,276.7 422.3,217.0 432.2,221.0 442.2,263.2 452.1,271.3 462.1,221.8 472.0,248.4 482.0,276.8 492.0,300.2 501.9,247.2 511.9,287.1 521.8,293.5 531.8,306.8 541.7,275.4 551.7,269.3 561.6,316.8 571.6,332.5 581.5,264.8 591.5,286.9 601.4,316.1 611.4,328.6 621.3,271.9 631.3,300.1 641.2,325.8 651.2,354.7 661.2,288.0 671.1,333.1 681.1,341.7 691.0,362.5 701.0,289.6 710.9,282.2 720.9,311.2 730.8,352.8 740.8,260.5 750.7,288.1 760.7,330.3 770.6,352.8 780.6,276.1 790.5,303.5 800.5,316.2 810.5,341.9" stroke="#00c800" stroke-width="0.95"/>
<polyline points="183.4,295.0 193.4,318.3 203.3,345.6 213.3,360.0 223.2,282.3 233.2,305.8 243.1,329.2 253.1,330.2 263.0,284.7 273.0,314.3 282.9,345.6 292.9,363.0 302.8,272.1 312.8,302.5 322.8,328.8 332.7,336.7 342.7,234.5 352.6,251.3 362.6,268.5 372.5,287.8 382.5,205.4 392.4,228.2 402.4,242.5 412.3,265.3 422.3,188.8 432.2,231.2 442.2,232.5 452.1,230.0 462.1,228.7 472.0,226.1 482.0,244.4 492.0,257.3 501.9,242.3 511.9,251.7 521.8,265.9 531.8,285.2 541.7,234.5 551.7,280.8 561.6,279.2 571.6,276.5 581.5,253.1 591.5,279.9 601.4,281.6 611.4,302.4 621.3,245.4 631.3,244.6 641.2,247.7 651.2,277.2 661.2,230.8 671.1,254.7 681.1,290.3 691.0,304.2 701.0,259.8 710.9,283.1 720.9,296.8 730.8,311.7 740.8,262.1 750.7,284.6 760.7,305.1 770.6,318.3 780.6,231.5 790.5,286.0 800.5,304.0 810.5,315.0" stroke="#c8c800" stroke-width="0.95"/>
<polyline points="183.4,305.1 193.4,326.7 203.3,354.5 213.3,368.6 223.2,286.0 233.2,314.0 243.1,341.7 253.1,355.4 263.0,295.1 273.0,323.9 282.9,353.5 292.9,370.3 302.8,284.6 312.8,313.9 322.8,343.7 332.7,358.0 342.7,255.6 352.6,273.5 362.6,283.1 372.5,318.8 382.5,242.1 392.4,263.6 402.4,264.2 412.3,274.7 422.3,250.2 432.2,264.6 442.2,269.2 452.1,288.8 462.1,258.1 472.0,284.3 482.0,282.0 492.0,285.7 501.9,253.8 511.9,263.5 521.8,285.0 531.8,284.1 541.7,253.2 551.7,260.0 561.6,250.0 571.6,286.5 581.5,242.6 591.5,257.5 601.4,284.2 611.4,288.1 621.3,260.7 631.3,277.7 641.2,299.1 651.2,315.2 661.2,280.1 671.1,316.4 681.1,312.3 691.0,322.7 701.0,280.7 710.9,321.7 720.9,339.6 730.8,323.7 740.8,289.5 750.7,324.3 760.7,318.9 770.6,337.2 780.6,265.8 790.5,290.2 800.5,284.7 810.5,269.6" stroke="#c8b400" stroke-width="0.95"/>
<polyline points="183.4,297.5 193.4,315.1 203.3,347.8 213.3,365.0 223.2,279.1 233.2,308.4 243.1,332.8 253.1,336.2 263.0,285.5 273.0,315.7 282.9,347.3 292.9,365.5 302.8,278.8 312.8,309.7 322.8,330.9 332.7,337.6 342.7,238.6 352.6,253.8 362.6,280.2 372.5,296.5 382.5,218.1 392.4,233.8 402.4,252.6 412.3,258.9 422.3,212.0 432.2,217.1 442.2,228.1 452.1,260.8 462.1,204.9 472.0,222.4 482.0,261.1 492.0,265.9 501.9,208.1 511.9,247.0 521.8,275.1 531.8,286.8 541.7,242.6 551.7,283.7 561.6,286.0 571.6,296.3 581.5,273.8 591.5,283.8 601.4,298.9 611.4,315.0 621.3,290.2 631.3,316.8 641.2,329.2 651.2,344.5 661.2,319.6 671.1,298.7 681.1,321.3 691.0,339.9 701.0,261.7 710.9,298.7 720.9,330.7 730.8,314.2 740.8,259.1 750.7,273.8 760.7,264.6 770.6,299.8 780.6,212.2 790.5,245.3 800.5,275.1 810.5,295.9" stroke="#d2a000" stroke-width="0.95"/>
<polyline points="183.4,304.8 193.4,328.7 203.3,352.8 213.3,367.6 223.2,292.6 233.2,320.9 243.1,345.1 253.1,363.8 263.0,312.5 273.0,328.7 282.9,360.1 292.9,376.4 302.8,283.3 312.8,317.4 322.8,345.8 332.7,357.0 342.7,243.7 352.6,262.4 362.6,295.5 372.5,325.8 382.5,212.1 392.4,240.1 402.4,271.2 412.3,279.0 422.3,221.1 432.2,246.8 442.2,253.4 452.1,254.7 462.1,223.6 472.0,252.4 482.0,269.9 492.0,281.4 501.9,232.7 511.9,267.6 521.8,290.4 531.8,297.8 541.7,246.9 551.7,268.4 561.6,303.8 571.6,292.8 581.5,234.1 591.5,273.9 601.4,290.3 611.4,281.1 621.3,249.8 631.3,258.5 641.2,290.3 651.2,293.6 661.2,235.1 671.1,265.7 681.1,283.5 691.0,267.1 701.0,203.2 710.9,215.5 720.9,261.8 730.8,282.6 740.8,197.2 750.7,220.7 760.7,243.6 770.6,259.7 780.6,188.6 790.5,225.0 800.5,251.3 810.5,256.4" stroke="#d28c00" stroke-width="0.95"/>
<polyline points="183.4,303.7 193.4,323.5 203.3,349.3 213.3,362.5 223.2,288.7 233.2,313.6 243.1,335.5 253.1,343.5 263.0,292.3 273.0,319.2 282.9,349.0 292.9,366.4 302.8,279.8 312.8,298.4 322.8,319.6 332.7,322.5 342.7,232.9 352.6,261.2 362.6,282.8 372.5,303.3 382.5,224.8 392.4,250.5 402.4,282.7 412.3,306.7 422.3,214.7 432.2,251.1 442.2,284.2 452.1,292.0 462.1,217.8 472.0,251.4 482.0,272.3 492.0,283.4 501.9,239.9 511.9,260.0 521.8,274.0 531.8,291.3 541.7,255.0 551.7,273.7 561.6,277.1 571.6,291.8 581.5,263.7 591.5,278.2 601.4,309.3 611.4,324.8 621.3,268.6 631.3,284.3 641.2,305.1 651.2,311.3 661.2,250.3 671.1,281.9 681.1,293.3 691.0,255.0 701.0,196.2 710.9,223.1 720.9,266.7 730.8,268.5 740.8,178.9 750.7,212.6 760.7,235.8 770.6,253.1 780.6,179.9 790.5,217.4 800.5,244.4 810.5,249.2" stroke="#d27800" stroke-width="0.95"/>
<polyline points="183.4,296.7 193.4,320.7 203.3,346.1 213.3,361.7 223.2,284.0 233.2,309.6 243.1,332.1 253.1,342.1 263.0,294.3 273.0,321.7 282.9,350.7 292.9,365.0 302.8,275.1 312.8,306.0 322.8,331.6 332.7,340.1 342.7,240.8 352.6,260.5 362.6,278.3 372.5,289.2 382.5,226.6 392.4,231.1 402.4,256.8 412.3,260.3 422.3,225.3 432.2,254.9 442.2,257.9 452.1,263.4 462.1,245.5 472.0,253.3 482.0,267.0 492.0,268.4 501.9,249.2 511.9,259.2 521.8,267.9 531.8,281.5 541.7,265.7 551.7,286.8 561.6,263.9 571.6,288.3 581.5,301.7 591.5,302.6 601.4,295.5 611.4,291.2 621.3,301.8 631.3,283.0 641.2,267.0 651.2,261.8 661.2,276.8 671.1,262.3 681.1,271.2 691.0,291.4 701.0,237.5 710.9,272.9 720.9,280.1 730.8,286.8 740.8,239.9 750.7,242.5 760.7,281.9 770.6,287.6 780.6,256.6 790.5,284.5 800.5,288.9 810.5,303.3" stroke="#c86408" stroke-width="0.95"/>
<polyline points="183.4,296.3 193.4,314.5 203.3,343.3 213.3,359.1 223.2,279.8 233.2,307.7 243.1,330.0 253.1,331.7 263.0,290.2 273.0,313.6 282.9,346.8 292.9,364.5 302.8,267.9 312.8,303.2 322.8,330.2 332.7,338.5 342.7,227.9 352.6,247.3 362.6,271.2 372.5,291.8 382.5,204.0 392.4,225.2 402.4,246.1 412.3,267.4 422.3,178.6 432.2,228.1 442.2,247.6 452.1,267.7 462.1,207.8 472.0,239.1 482.0,271.8 492.0,280.6 501.9,235.5 511.9,257.0 521.8,276.0 531.8,286.1 541.7,244.8 551.7,258.0 561.6,271.3 571.6,266.3 581.5,260.6 591.5,268.2 601.4,268.9 611.4,296.3 621.3,257.5 631.3,262.6 641.2,282.4 651.2,302.5 661.2,253.4 671.1,271.7 681.1,304.3 691.0,306.3 701.0,209.9 710.9,249.6 720.9,299.2 730.8,290.8 740.8,227.8 750.7,269.8 760.7,276.6 770.6,277.5 780.6,252.6 790.5,266.6 800.5,292.7 810.5,310.6" stroke="#c8560c" stroke-width="0.95"/>
<polyline points="183.4,299.1 193.4,317.0 203.3,347.2 213.3,360.4 223.2,280.4 233.2,306.4 243.1,331.4 253.1,334.7 263.0,287.9 273.0,312.8 282.9,346.2 292.9,363.5 302.8,266.8 312.8,301.0 322.8,329.5 332.7,341.0 342.7,229.6 352.6,248.7 362.6,269.9 372.5,295.4 382.5,208.2 392.4,243.0 402.4,258.0 412.3,270.8 422.3,193.5 432.2,248.0 442.2,262.4 452.1,271.5 462.1,234.3 472.0,259.4 482.0,296.8 492.0,281.9 501.9,273.2 511.9,279.6 521.8,296.9 531.8,303.5 541.7,250.2 551.7,263.5 561.6,281.8 571.6,308.8 581.5,280.2 591.5,288.9 601.4,303.5 611.4,300.1 621.3,278.1 631.3,303.8 641.2,302.0 651.2,327.4 661.2,292.4 671.1,295.1 681.1,305.1 691.0,309.2 701.0,285.0 710.9,289.0 720.9,294.1 730.8,297.7 740.8,268.9 750.7,283.6 760.7,310.4 770.6,310.7 780.6,257.5 790.5,277.6 800.5,309.8 810.5,313.2" stroke="#be3c14" stroke-width="0.95"/>
<polyline points="183.4,297.1 193.4,315.8 203.3,345.0 213.3,363.3 223.2,278.5 233.2,309.0 243.1,334.2 253.1,340.6 263.0,289.4 273.0,315.0 282.9,350.1 292.9,369.9 302.8,271.1 312.8,305.3 322.8,338.3 332.7,348.5 342.7,242.6 352.6,258.1 362.6,275.0 372.5,297.5 382.5,209.6 392.4,229.7 402.4,247.8 412.3,262.9 422.3,222.8 432.2,236.6 442.2,260.9 452.1,265.7 462.1,229.9 472.0,253.0 482.0,311.3 492.0,295.2 501.9,243.2 511.9,261.9 521.8,278.0 531.8,287.9 541.7,258.4 551.7,270.4 561.6,288.1 571.6,294.3 581.5,283.9 591.5,313.6 601.4,323.9 611.4,312.2 621.3,286.8 631.3,312.2 641.2,307.0 651.2,331.2 661.2,283.9 671.1,280.0 681.1,324.8 691.0,319.3 701.0,294.5 710.9,333.1 720.9,344.4 730.8,343.1 740.8,319.6 750.7,330.0 760.7,344.3 770.6,347.3 780.6,305.1 790.5,327.4 800.5,359.6 810.5,366.5" stroke="#aa281e" stroke-width="0.95"/>
<polyline points="183.4,298.3 193.4,318.9 203.3,349.8 213.3,364.4 223.2,285.7 233.2,317.5 243.1,339.0 253.1,346.2 263.0,299.0 273.0,324.3 282.9,352.2 292.9,368.7 302.8,273.1 312.8,301.8 322.8,332.3 332.7,345.6 342.7,224.2 352.6,250.0 362.6,279.3 372.5,300.3 382.5,206.9 392.4,226.7 402.4,244.3 412.3,257.5 422.3,183.9 432.2,213.0 442.2,223.4 452.1,239.2 462.1,215.5 472.0,241.8 482.0,250.7 492.0,263.2 501.9,202.8 511.9,231.7 521.8,254.1 531.8,268.5 541.7,224.5 551.7,242.5 561.6,226.6 571.6,254.1 581.5,224.6 591.5,253.4 601.4,261.1 611.4,258.9 621.3,211.2 631.3,233.8 641.2,232.9 651.2,267.2 661.2,264.6 671.1,276.5 681.1,298.4 691.0,308.8 701.0,276.7 710.9,276.1 720.9,301.3 730.8,312.0 740.8,306.5 750.7,296.9 760.7,304.3 770.6,313.6 780.6,284.6 790.5,316.9 800.5,352.8 810.5,359.8" stroke="#a01414" stroke-width="0.95"/>
<polyline points="183.4,303.0 193.4,325.7 203.3,355.8 213.3,369.0 223.2,282.9 233.2,315.9 243.1,343.6 253.1,361.6 263.0,301.8 273.0,326.7 282.9,359.0 292.9,367.4 302.8,264.7 312.8,306.6 322.8,337.2 332.7,346.3 342.7,245.3 352.6,265.5 362.6,287.4 372.5,308.9 382.5,237.2 392.4,248.3 402.4,273.3 412.3,286.9 422.3,240.8 432.2,259.5 442.2,278.5 452.1,274.6 462.1,254.7 472.0,257.2 482.0,273.4 492.0,292.9 501.9,269.5 511.9,291.3 521.8,308.6 531.8,314.1 541.7,271.9 551.7,267.2 561.6,283.0 571.6,317.2 581.5,265.7 591.5,282.8 601.4,293.5 611.4,301.3 621.3,280.8 631.3,266.3 641.2,272.5 651.2,306.6 661.2,269.3 671.1,282.2 681.1,296.0 691.0,272.6 701.0,264.0 710.9,265.0 720.9,305.3 730.8,308.0 740.8,272.1 750.7,282.0 760.7,302.7 770.6,303.0 780.6,249.6 790.5,270.8 800.5,301.2 810.5,317.4" stroke="#0032e6" stroke-width="0.95"/>
<polyline points="183.4,297.9 193.4,322.3 203.3,352.4 213.3,366.2 223.2,281.7 233.2,312.0 243.1,341.2 253.1,356.4 263.0,287.1 273.0,323.5 282.9,356.6 292.9,374.9 302.8,281.5 312.8,316.0 322.8,339.6 332.7,354.1 342.7,250.5 352.6,272.2 362.6,284.5 372.5,298.5 382.5,228.5 392.4,241.8 402.4,251.1 412.3,271.3 422.3,228.7 432.2,245.7 442.2,255.8 452.1,251.2 462.1,226.5 472.0,246.4 482.0,263.3 492.0,276.6 501.9,241.4 511.9,241.5 521.8,271.3 531.8,280.0 541.7,253.9 551.7,268.6 561.6,284.3 571.6,290.9 581.5,292.2 591.5,296.4 601.4,293.7 611.4,305.7 621.3,267.3 631.3,279.6 641.2,299.5 651.2,313.1 661.2,266.5 671.1,274.2 681.1,304.0 691.0,307.8 701.0,216.2 710.9,295.1 720.9,349.5 730.8,358.1 740.8,312.9 750.7,336.0 760.7,349.5 770.6,358.7 780.6,289.3 790.5,287.9 800.5,340.4 810.5,347.5" stroke="#0070d0" stroke-width="0.95"/>
<polyline points="183.4,301.3 193.4,328.2 203.3,354.1 213.3,366.5 223.2,283.5 233.2,311.4 243.1,342.6 253.1,353.5 263.0,283.9 273.0,317.8 282.9,348.5 292.9,366.9 302.8,270.0 312.8,303.9 322.8,336.1 332.7,344.9 342.7,235.9 352.6,254.9 362.6,282.4 372.5,301.6 382.5,230.5 392.4,244.5 402.4,261.0 412.3,289.9 422.3,223.9 432.2,238.9 442.2,264.4 452.1,278.3 462.1,238.1 472.0,264.9 482.0,292.6 492.0,287.2 501.9,265.9 511.9,273.0 521.8,282.7 531.8,300.5 541.7,283.1 551.7,293.9 561.6,307.9 571.6,338.2 581.5,268.9 591.5,306.1 601.4,332.6 611.4,341.3 621.3,275.8 631.3,326.8 641.2,319.5 651.2,349.4 661.2,258.8 671.1,302.6 681.1,337.1 691.0,350.5 701.0,256.1 710.9,306.9 720.9,326.7 730.8,347.8 740.8,261.0 750.7,290.6 760.7,326.2 770.6,332.7 780.6,258.9 790.5,293.0 800.5,346.4 810.5,353.5" stroke="#0096c8" stroke-width="0.95"/>
<polyline points="183.4,304.1 193.4,327.2 203.3,352.0 213.3,365.3 223.2,292.1 233.2,319.8 243.1,339.8 253.1,347.5 263.0,314.1 273.0,324.8 282.9,349.6 292.9,365.9 302.8,283.9 312.8,315.3 322.8,339.0 332.7,347.7 342.7,251.7 352.6,267.5 362.6,283.7 372.5,310.7 382.5,239.6 392.4,260.7 402.4,277.8 412.3,271.8 422.3,221.9 432.2,242.4 442.2,261.9 452.1,276.3 462.1,225.2 472.0,244.2 482.0,268.6 492.0,254.1 501.9,191.4 511.9,228.0 521.8,277.1 531.8,288.6 541.7,253.0 551.7,275.8 561.6,293.5 571.6,305.1 581.5,255.9 591.5,276.2 601.4,312.6 611.4,332.6 621.3,235.4 631.3,272.7 641.2,300.0 651.2,317.8 661.2,273.8 671.1,291.8 681.1,332.8 691.0,311.7 701.0,266.6 710.9,291.8 720.9,313.7 730.8,316.0 740.8,280.0 750.7,309.0 760.7,322.4 770.6,328.5 780.6,272.3 790.5,312.1 800.5,329.4 810.5,308.7" stroke="#00aab4" stroke-width="0.95"/>
<polyline points="183.4,299.5 193.4,323.0 203.3,354.9 213.3,369.3 223.2,287.7 233.2,315.4 243.1,344.6 253.1,358.5 263.0,304.8 273.0,328.2 282.9,359.6 292.9,375.9 302.8,287.1 312.8,318.9 322.8,345.1 332.7,351.2 342.7,247.2 352.6,261.6 362.6,298.7 372.5,323.4 382.5,221.8 392.4,266.6 402.4,287.9 412.3,293.0 422.3,233.0 432.2,267.5 442.2,287.4 452.1,283.0 462.1,248.3 472.0,299.4 482.0,285.2 492.0,282.1 501.9,251.4 511.9,260.7 521.8,280.8 531.8,289.8 541.7,248.7 551.7,261.9 561.6,267.8 571.6,284.4 581.5,229.5 591.5,244.5 601.4,275.7 611.4,309.8 621.3,229.9 631.3,281.0 641.2,313.9 651.2,339.8 661.2,297.2 671.1,321.7 681.1,308.0 691.0,313.8 701.0,269.6 710.9,286.6 720.9,305.0 730.8,312.9 740.8,275.8 750.7,300.6 760.7,306.5 770.6,324.7 780.6,268.9 790.5,299.6 800.5,307.3 810.5,332.0" stroke="#00aa78" stroke-width="0.95"/>
<polyline points="183.4,302.0 193.4,324.3 203.3,350.6 213.3,364.0 223.2,289.1 233.2,314.9 243.1,334.9 253.1,344.8 263.0,300.4 273.0,322.2 282.9,351.7 292.9,369.1 302.8,277.9 312.8,308.6 322.8,335.5 332.7,341.8 342.7,242.3 352.6,261.9 362.6,277.2 372.5,293.0 382.5,220.5 392.4,235.0 402.4,249.5 412.3,264.1 422.3,218.9 432.2,240.8 442.2,250.7 452.1,247.5 462.1,229.4 472.0,233.1 482.0,247.6 492.0,270.7 501.9,221.9 511.9,258.2 521.8,261.6 531.8,272.8 541.7,237.4 551.7,255.8 561.6,259.7 571.6,273.3 581.5,258.5 591.5,271.2 601.4,265.1 611.4,268.6 621.3,224.0 631.3,239.3 641.2,240.5 651.2,272.3 661.2,226.1 671.1,241.5 681.1,261.8 691.0,295.2 701.0,232.8 710.9,230.3 720.9,275.9 730.8,273.5 740.8,188.3 750.7,228.4 760.7,251.0 770.6,266.0 780.6,204.8 790.5,232.2 800.5,257.8 810.5,263.2" stroke="#00af50" stroke-width="0.95"/>
<polyline points="183.4,302.7 193.4,323.9 203.3,346.7 213.3,362.9 223.2,286.4 233.2,314.4 243.1,338.1 253.1,348.8 263.0,303.3 273.0,325.3 282.9,354.3 292.9,371.1 302.8,287.8 312.8,312.6 322.8,336.7 332.7,344.1 342.7,239.7 352.6,259.8 362.6,273.8 372.5,299.4 382.5,217.3 392.4,246.3 402.4,263.0 412.3,268.4 422.3,230.7 432.2,244.3 442.2,275.9 452.1,270.5 462.1,227.7 472.0,236.2 482.0,265.2 492.0,278.2 501.9,213.0 511.9,249.5 521.8,269.7 531.8,282.9 541.7,231.3 551.7,253.5 561.6,274.4 571.6,291.5 581.5,276.8 591.5,282.1 601.4,292.8 611.4,293.9 621.3,283.7 631.3,281.9 641.2,277.7 651.2,289.9 661.2,261.1 671.1,283.1 681.1,300.4 691.0,298.6 701.0,258.4 710.9,281.8 720.9,304.2 730.8,309.7 740.8,256.7 750.7,277.1 760.7,286.7 770.6,305.8 780.6,256.2 790.5,274.4 800.5,280.1 810.5,306.3" stroke="#00b432" stroke-width="0.95"/>
<polyline points="183.4,302.3 193.4,324.8 203.3,348.8 213.3,364.7 223.2,287.3 233.2,318.1 243.1,339.4 253.1,354.4 263.0,311.0 273.0,325.7 282.9,356.1 292.9,372.0 302.8,282.7 312.8,309.2 322.8,334.3 332.7,350.3 342.7,244.5 352.6,264.6 362.6,286.3 372.5,314.6 382.5,223.2 392.4,237.3 402.4,275.5 412.3,284.1 422.3,201.9 432.2,243.6 442.2,261.6 452.1,273.2 462.1,210.5 472.0,254.1 482.0,288.7 492.0,297.6 501.9,229.4 511.9,253.7 521.8,272.7 531.8,278.4 541.7,220.8 551.7,248.3 561.6,255.0 571.6,282.0 581.5,219.4 591.5,249.1 601.4,288.6 611.4,284.8 621.3,263.4 631.3,275.4 641.2,296.0 651.2,304.8 661.2,267.7 671.1,284.6 681.1,303.3 691.0,277.8 701.0,254.4 710.9,269.2 720.9,303.0 730.8,318.2 740.8,245.0 750.7,283.2 760.7,291.0 770.6,309.7 780.6,260.8 790.5,282.1 800.5,304.4 810.5,299.8" stroke="#00be14" stroke-width="0.95"/>
<polyline points="183.4,304.4 193.4,329.2 203.3,356.2 213.3,369.7 223.2,291.6 233.2,321.5 243.1,345.6 253.1,359.5 263.0,309.4 273.0,327.7 282.9,357.6 292.9,373.0 302.8,285.8 312.8,319.6 322.8,341.6 332.7,356.0 342.7,257.0 352.6,274.9 362.6,291.2 372.5,302.5 382.5,244.7 392.4,272.9 402.4,285.3 412.3,303.1 422.3,243.8 432.2,257.1 442.2,281.3 452.1,307.1 462.1,232.8 472.0,268.2 482.0,301.3 492.0,309.0 501.9,262.5 511.9,295.7 521.8,317.7 531.8,326.8 541.7,291.6 551.7,301.8 561.6,326.8 571.6,344.2 581.5,267.1 591.5,299.4 601.4,319.9 611.4,336.8 621.3,240.6 631.3,286.0 641.2,316.6 651.2,323.9 661.2,256.2 671.1,311.5 681.1,346.6 691.0,356.4 701.0,299.7 710.9,327.2 720.9,323.0 730.8,334.4 740.8,300.4 750.7,313.8 760.7,339.4 770.6,342.1 780.6,263.1 790.5,296.1 800.5,312.7 810.5,336.8" stroke="#00c800" stroke-width="0.95"/>
<polyline points="183.4,303.3 193.4,326.2 203.3,351.3 213.3,365.6 223.2,286.8 233.2,317.0 243.1,338.6 253.1,350.8 263.0,306.3 273.0,322.6 282.9,353.1 292.9,371.6 302.8,280.4 312.8,311.3 322.8,337.7 332.7,352.2 342.7,241.7 352.6,269.8 362.6,297.1 372.5,316.6 382.5,232.6 392.4,269.7 402.4,280.2 412.3,296.2 422.3,221.4 432.2,244.5 442.2,271.2 452.1,285.8 462.1,230.1 472.0,275.6 482.0,322.5 492.0,303.0 501.9,277.2 511.9,300.3 521.8,313.0 531.8,295.3 541.7,287.2 551.7,306.1 561.6,312.2 571.6,327.1 581.5,306.8 591.5,317.7 601.4,328.1 611.4,318.0 621.3,297.7 631.3,307.9 641.2,322.6 651.2,335.4 661.2,302.3 671.1,327.2 681.1,310.0 691.0,316.3 701.0,257.2 710.9,278.7 720.9,319.6 730.8,330.5 740.8,294.8 750.7,304.6 760.7,300.7 770.6,321.3 780.6,294.3 790.5,307.6 800.5,320.2 810.5,323.7" stroke="#c8be00" stroke-width="0.95"/>
<polyline points="183.4,299.4 193.4,319.6 203.3,349.5 213.3,364.9 223.2,284.9 233.2,311.9 243.1,338.9 253.1,353.3 263.0,292.6 273.0,320.6 282.9,353.3 292.9,370.7 302.8,277.2 312.8,308.0 322.8,336.0 332.7,348.5 342.7,233.8 352.6,253.1 362.6,276.2 372.5,296.5 382.5,215.5 392.4,238.6 402.4,256.0 412.3,268.5 422.3,236.7 432.2,256.0 442.2,287.8 452.1,268.5 462.1,264.7 472.0,279.1 482.0,288.8 492.0,297.4 501.9,236.7 511.9,259.8 521.8,283.0 531.8,294.5 541.7,232.4 551.7,250.2 561.6,265.6 571.6,285.9 581.5,253.1 591.5,277.2 601.4,280.1 611.4,282.0 621.3,276.2 631.3,276.2 641.2,305.1 651.2,315.7 661.2,266.6 671.1,280.1 681.1,298.4 691.0,304.2 701.0,261.8 710.9,293.6 720.9,319.1 730.8,309.0 740.8,273.3 750.7,293.6 760.7,319.1 770.6,336.0 780.6,263.2 790.5,282.0 800.5,304.2 810.5,310.9" stroke="#0000ff" stroke-width="2.9"/>
<polyline points="183.4,300.3 193.4,322.5 203.3,350.4 213.3,364.9 223.2,285.9 233.2,313.8 243.1,338.9 253.1,350.4 263.0,294.5 273.0,322.5 282.9,353.3 292.9,369.7 302.8,279.1 312.8,310.0 322.8,336.9 332.7,346.6 342.7,242.5 352.6,261.8 362.6,283.0 372.5,302.2 382.5,219.4 392.4,241.5 402.4,261.8 412.3,271.4 422.3,221.3 432.2,244.4 442.2,261.8 452.1,271.4 462.1,230.0 472.0,253.1 482.0,272.4 492.0,282.0 501.9,242.5 511.9,259.8 521.8,277.2 531.8,287.8 541.7,253.1 551.7,268.5 561.6,282.0 571.6,291.6 581.5,264.7 591.5,282.0 601.4,293.6 611.4,302.2 621.3,268.5 631.3,282.0 641.2,299.4 651.2,309.0 661.2,266.6 671.1,282.0 681.1,304.2 691.0,309.0 701.0,257.4 710.9,282.0 720.9,305.1 730.8,311.9 740.8,260.8 750.7,283.5 760.7,304.2 770.6,310.9 780.6,256.5 790.5,283.5 800.5,304.2 810.5,311.9" stroke="#ffffff" stroke-width="2.9"/>
<polyline points="183.4,299.4 193.4,334.0 203.3,370.7 213.3,379.3 223.2,282.0 233.2,314.8 243.1,345.6 253.1,358.1 263.0,295.5 273.0,329.2 282.9,368.7 292.9,375.5 302.8,283.0 312.8,319.6 322.8,348.5 332.7,361.0 342.7,247.3 352.6,271.4 362.6,300.8 372.5,297.9 382.5,245.4 392.4,267.6 402.4,285.9 412.3,283.4 422.3,227.1 432.2,247.3 442.2,265.6 452.1,271.4 462.1,212.6 472.0,244.4 482.0,267.6 492.0,273.3 501.9,226.6 511.9,247.3 521.8,261.8 531.8,271.4 541.7,197.2 551.7,242.5 561.6,258.9 571.6,271.4 581.5,250.2 591.5,261.8 601.4,258.9 611.4,265.6 621.3,238.6 631.3,256.0 641.2,259.8 651.2,271.4 661.2,278.2 671.1,282.0 681.1,305.1 691.0,327.3 701.0,309.0 710.9,335.0 720.9,335.0 730.8,336.0 740.8,297.4 750.7,312.3 760.7,337.9 770.6,348.5 780.6,297.4 790.5,319.1 800.5,349.5 810.5,344.6" stroke="#00dc00" stroke-width="2.9"/>
</g>
<rect x="163.5" y="30.5" width="647" height="530" fill="none" stroke="#e4e4e4" stroke-width="1"/>
<g stroke="#fff" stroke-width="1"><line x1="804.5" y1="560.50" x2="810.5" y2="560.50"/><line x1="806.5" y1="547.50" x2="810.5" y2="547.50"/><line x1="804.5" y1="534.50" x2="810.5" y2="534.50"/><line x1="806.5" y1="520.50" x2="810.5" y2="520.50"/><line x1="804.5" y1="507.50" x2="810.5" y2="507.50"/><line x1="806.5" y1="494.50" x2="810.5" y2="494.50"/><line x1="804.5" y1="481.50" x2="810.5" y2="481.50"/><line x1="806.5" y1="467.50" x2="810.5" y2="467.50"/><line x1="804.5" y1="454.50" x2="810.5" y2="454.50"/><line x1="806.5" y1="441.50" x2="810.5" y2="441.50"/><line x1="804.5" y1="428.50" x2="810.5" y2="428.50"/><line x1="806.5" y1="414.50" x2="810.5" y2="414.50"/><line x1="804.5" y1="401.50" x2="810.5" y2="401.50"/><line x1="806.5" y1="388.50" x2="810.5" y2="388.50"/><line x1="804.5" y1="375.50" x2="810.5" y2="375.50"/><line x1="806.5" y1="361.50" x2="810.5" y2="361.50"/><line x1="804.5" y1="348.50" x2="810.5" y2="348.50"/><line x1="806.5" y1="335.50" x2="810.5" y2="335.50"/><line x1="804.5" y1="322.50" x2="810.5" y2="322.50"/><line x1="806.5" y1="308.50" x2="810.5" y2="308.50"/><line x1="804.5" y1="295.50" x2="810.5" y2="295.50"/><line x1="806.5" y1="282.50" x2="810.5" y2="282.50"/><line x1="804.5" y1="269.50" x2="810.5" y2="269.50"/><line x1="806.5" y1="255.50" x2="810.5" y2="255.50"/><line x1="804.5" y1="242.50" x2="810.5" y2="242.50"/><line x1="806.5" y1="229.50" x2="810.5" y2="229.50"/><line x1="804.5" y1="216.50" x2="810.5" y2="216.50"/><line x1="806.5" y1="202.50" x2="810.5" y2="202.50"/><line x1="804.5" y1="189.50" x2="810.5" y2="189.50"/><line x1="806.5" y1="176.50" x2="810.5" y2="176.50"/><line x1="804.5" y1="163.50" x2="810.5" y2="163.50"/><line x1="806.5" y1="149.50" x2="810.5" y2="149.50"/><line x1="804.5" y1="136.50" x2="810.5" y2="136.50"/><line x1="806.5" y1="123.50" x2="810.5" y2="123.50"/><line x1="804.5" y1="110.50" x2="810.5" y2="110.50"/><line x1="806.5" y1="96.50" x2="810.5" y2="96.50"/><line x1="804.5" y1="83.50" x2="810.5" y2="83.50"/><line x1="806.5" y1="70.50" x2="810.5" y2="70.50"/><line x1="804.5" y1="57.50" x2="810.5" y2="57.50"/><line x1="806.5" y1="43.50" x2="810.5" y2="43.50"/><line x1="804.5" y1="30.50" x2="810.5" y2="30.50"/></g>
<text x="435.5" y="17.2" font-size="16" textLength="549.1" lengthAdjust="spacingAndGlyphs" text-anchor="middle" font-weight="bold" xml:space="preserve">De Bilt  (NL)  2m Temp. &amp; Precipitation | Sat, 15Mar2025 06Z</text>
<text x="154.2" y="563.1" font-size="10.67" textLength="17.4" lengthAdjust="spacingAndGlyphs" text-anchor="end" xml:space="preserve">-20</text>
<text x="154.2" y="514.9" font-size="10.67" textLength="17.4" lengthAdjust="spacingAndGlyphs" text-anchor="end" xml:space="preserve">-15</text>
<text x="154.2" y="466.7" font-size="10.67" textLength="17.4" lengthAdjust="spacingAndGlyphs" text-anchor="end" xml:space="preserve">-10</text>
<text x="154.2" y="418.6" font-size="10.67" textLength="10.6" lengthAdjust="spacingAndGlyphs" text-anchor="end" xml:space="preserve">-5</text>
<text x="154.2" y="370.4" font-size="10.67" textLength="6.8" lengthAdjust="spacingAndGlyphs" text-anchor="end" xml:space="preserve">0</text>
<text x="154.2" y="322.2" font-size="10.67" textLength="6.8" lengthAdjust="spacingAndGlyphs" text-anchor="end" xml:space="preserve">5</text>
<text x="154.2" y="274.0" font-size="10.67" textLength="13.6" lengthAdjust="spacingAndGlyphs" text-anchor="end" xml:space="preserve">10</text>
<text x="154.2" y="225.8" font-size="10.67" textLength="13.6" lengthAdjust="spacingAndGlyphs" text-anchor="end" xml:space="preserve">15</text>
<text x="154.2" y="177.7" font-size="10.67" textLength="13.6" lengthAdjust="spacingAndGlyphs" text-anchor="end" xml:space="preserve">20</text>
<text x="154.2" y="129.5" font-size="10.67" textLength="13.6" lengthAdjust="spacingAndGlyphs" text-anchor="end" xml:space="preserve">25</text>
<text x="154.2" y="81.3" font-size="10.67" textLength="13.6" lengthAdjust="spacingAndGlyphs" text-anchor="end" xml:space="preserve">30</text>
<text x="154.2" y="33.1" font-size="10.67" textLength="13.6" lengthAdjust="spacingAndGlyphs" text-anchor="end" xml:space="preserve">35</text>
<text x="816.9" y="563.1" font-size="10.67" textLength="6.8" lengthAdjust="spacingAndGlyphs" text-anchor="start" xml:space="preserve">0</text>
<text x="816.9" y="430.6" font-size="10.67" textLength="13.6" lengthAdjust="spacingAndGlyphs" text-anchor="start" xml:space="preserve">10</text>
<text x="816.9" y="298.1" font-size="10.67" textLength="13.6" lengthAdjust="spacingAndGlyphs" text-anchor="start" xml:space="preserve">20</text>
<text x="816.9" y="165.6" font-size="10.67" textLength="13.6" lengthAdjust="spacingAndGlyphs" text-anchor="start" xml:space="preserve">30</text>
<text x="816.9" y="33.1" font-size="10.67" textLength="13.6" lengthAdjust="spacingAndGlyphs" text-anchor="start" xml:space="preserve">40</text>
<text x="162.0" y="577.2" font-size="10.67" textLength="56.3" lengthAdjust="spacingAndGlyphs" text-anchor="middle" xml:space="preserve">15Mar 00z</text>
<text x="241.6" y="577.2" font-size="10.67" textLength="56.3" lengthAdjust="spacingAndGlyphs" text-anchor="middle" xml:space="preserve">17Mar 00z</text>
<text x="321.2" y="577.2" font-size="10.67" textLength="56.3" lengthAdjust="spacingAndGlyphs" text-anchor="middle" xml:space="preserve">19Mar 00z</text>
<text x="400.9" y="577.2" font-size="10.67" textLength="56.3" lengthAdjust="spacingAndGlyphs" text-anchor="middle" xml:space="preserve">21Mar 00z</text>
<text x="480.5" y="577.2" font-size="10.67" textLength="56.3" lengthAdjust="spacingAndGlyphs" text-anchor="middle" xml:space="preserve">23Mar 00z</text>
<text x="560.1" y="577.2" font-size="10.67" textLength="56.3" lengthAdjust="spacingAndGlyphs" text-anchor="middle" xml:space="preserve">25Mar 00z</text>
<text x="639.8" y="577.2" font-size="10.67" textLength="56.3" lengthAdjust="spacingAndGlyphs" text-anchor="middle" xml:space="preserve">27Mar 00z</text>
<text x="719.4" y="577.2" font-size="10.67" textLength="56.3" lengthAdjust="spacingAndGlyphs" text-anchor="middle" xml:space="preserve">29Mar 00z</text>
<text x="799.0" y="577.2" font-size="10.67" textLength="56.3" lengthAdjust="spacingAndGlyphs" text-anchor="middle" xml:space="preserve">31Mar 00z</text>
<text x="487.0" y="593.0" font-size="10.67" textLength="58.4" lengthAdjust="spacingAndGlyphs" text-anchor="middle" xml:space="preserve">Date (UTC)</text>
<text x="134.6" y="295.5" font-size="10.67" textLength="76.9" lengthAdjust="spacingAndGlyphs" text-anchor="middle" transform="rotate(-90 134.6 295.5)" xml:space="preserve">2m Temp. (°C)</text>
<text x="843.4" y="297.0" font-size="10.67" textLength="99.2" lengthAdjust="spacingAndGlyphs" text-anchor="middle" transform="rotate(-90 843.4 297.0)" xml:space="preserve">Precipitation (mm)</text>
<text x="120.0" y="604.4" font-size="16" textLength="188.0" lengthAdjust="spacingAndGlyphs" text-anchor="start" xml:space="preserve">GFS Ensemble, 52N, 5E</text>
<text x="650.0" y="604.4" font-size="16" textLength="144.1" lengthAdjust="spacingAndGlyphs" text-anchor="start" xml:space="preserve">Wetterzentrale.de</text>
<text x="9.5" y="42.5" font-size="10.67" textLength="13.2" lengthAdjust="spacingAndGlyphs" text-anchor="start" xml:space="preserve">P1</text>
<text x="65.5" y="42.5" font-size="10.67" textLength="13.2" lengthAdjust="spacingAndGlyphs" text-anchor="start" xml:space="preserve">P2</text>
<text x="9.5" y="57.5" font-size="10.67" textLength="13.2" lengthAdjust="spacingAndGlyphs" text-anchor="start" xml:space="preserve">P3</text>
<text x="65.5" y="57.5" font-size="10.67" textLength="13.2" lengthAdjust="spacingAndGlyphs" text-anchor="start" xml:space="preserve">P4</text>
<text x="9.5" y="72.5" font-size="10.67" textLength="13.2" lengthAdjust="spacingAndGlyphs" text-anchor="start" xml:space="preserve">P5</text>
<text x="65.5" y="72.5" font-size="10.67" textLength="13.2" lengthAdjust="spacingAndGlyphs" text-anchor="start" xml:space="preserve">P6</text>
<text x="9.5" y="87.5" font-size="10.67" textLength="13.2" lengthAdjust="spacingAndGlyphs" text-anchor="start" xml:space="preserve">P7</text>
<text x="65.5" y="87.5" font-size="10.67" textLength="13.2" lengthAdjust="spacingAndGlyphs" text-anchor="start" xml:space="preserve">P8</text>
<text x="9.5" y="102.5" font-size="10.67" textLength="13.2" lengthAdjust="spacingAndGlyphs" text-anchor="start" xml:space="preserve">P9</text>
<text x="65.5" y="102.5" font-size="10.67" textLength="20.0" lengthAdjust="spacingAndGlyphs" text-anchor="start" xml:space="preserve">P10</text>
<text x="9.5" y="117.5" font-size="10.67" textLength="20.0" lengthAdjust="spacingAndGlyphs" text-anchor="start" xml:space="preserve">P11</text>
<text x="65.5" y="117.5" font-size="10.67" textLength="20.0" lengthAdjust="spacingAndGlyphs" text-anchor="start" xml:space="preserve">P12</text>
<text x="9.5" y="132.5" font-size="10.67" textLength="20.0" lengthAdjust="spacingAndGlyphs" text-anchor="start" xml:space="preserve">P13</text>
<text x="65.5" y="132.5" font-size="10.67" textLength="20.0" lengthAdjust="spacingAndGlyphs" text-anchor="start" xml:space="preserve">P14</text>
<text x="9.5" y="147.5" font-size="10.67" textLength="20.0" lengthAdjust="spacingAndGlyphs" text-anchor="start" xml:space="preserve">P15</text>
<text x="65.5" y="147.5" font-size="10.67" textLength="20.0" lengthAdjust="spacingAndGlyphs" text-anchor="start" xml:space="preserve">P16</text>
<text x="9.5" y="162.5" font-size="10.67" textLength="20.0" lengthAdjust="spacingAndGlyphs" text-anchor="start" xml:space="preserve">P17</text>
<text x="65.5" y="162.5" font-size="10.67" textLength="20.0" lengthAdjust="spacingAndGlyphs" text-anchor="start" xml:space="preserve">P18</text>
<text x="9.5" y="177.5" font-size="10.67" textLength="20.0" lengthAdjust="spacingAndGlyphs" text-anchor="start" xml:space="preserve">P19</text>
<text x="65.5" y="177.5" font-size="10.67" textLength="20.0" lengthAdjust="spacingAndGlyphs" text-anchor="start" xml:space="preserve">P20</text>
<text x="9.5" y="192.5" font-size="10.67" textLength="20.0" lengthAdjust="spacingAndGlyphs" text-anchor="start" xml:space="preserve">P21</text>
<text x="65.5" y="192.5" font-size="10.67" textLength="20.0" lengthAdjust="spacingAndGlyphs" text-anchor="start" xml:space="preserve">P22</text>
<text x="9.5" y="207.5" font-size="10.67" textLength="20.0" lengthAdjust="spacingAndGlyphs" text-anchor="start" xml:space="preserve">P23</text>
<text x="65.5" y="207.5" font-size="10.67" textLength="20.0" lengthAdjust="spacingAndGlyphs" text-anchor="start" xml:space="preserve">P24</text>
<text x="9.5" y="222.5" font-size="10.67" textLength="20.0" lengthAdjust="spacingAndGlyphs" text-anchor="start" xml:space="preserve">P25</text>
<text x="65.5" y="222.5" font-size="10.67" textLength="20.0" lengthAdjust="spacingAndGlyphs" text-anchor="start" xml:space="preserve">P26</text>
<text x="9.5" y="237.5" font-size="10.67" textLength="20.0" lengthAdjust="spacingAndGlyphs" text-anchor="start" xml:space="preserve">P27</text>
<text x="65.5" y="237.5" font-size="10.67" textLength="20.0" lengthAdjust="spacingAndGlyphs" text-anchor="start" xml:space="preserve">P28</text>
<text x="9.5" y="252.5" font-size="10.67" textLength="20.0" lengthAdjust="spacingAndGlyphs" text-anchor="start" xml:space="preserve">P29</text>
<text x="65.5" y="252.5" font-size="10.67" textLength="20.0" lengthAdjust="spacingAndGlyphs" text-anchor="start" xml:space="preserve">P30</text>
<text x="9.6" y="268.6" font-size="10.67" textLength="38.6" lengthAdjust="spacingAndGlyphs" text-anchor="start" xml:space="preserve">Control</text>
<text x="65.4" y="268.6" font-size="10.67" textLength="56.1" lengthAdjust="spacingAndGlyphs" text-anchor="start" xml:space="preserve">Ens. mean</text>
<text x="9.6" y="284.7" font-size="10.67" textLength="26.1" lengthAdjust="spacingAndGlyphs" text-anchor="start" xml:space="preserve">Oper</text>
<line x1="0.0" y1="41.0" x2="8.8" y2="41.0" stroke="#0a14e6" stroke-width="1.9"/><line x1="54.3" y1="41.0" x2="64.7" y2="41.0" stroke="#0050dc" stroke-width="1.9"/><line x1="0.0" y1="56.0" x2="8.8" y2="56.0" stroke="#0070d0" stroke-width="1.9"/><line x1="54.3" y1="56.0" x2="64.7" y2="56.0" stroke="#0096c8" stroke-width="1.9"/><line x1="0.0" y1="71.0" x2="8.8" y2="71.0" stroke="#00aabe" stroke-width="1.9"/><line x1="54.3" y1="71.0" x2="64.7" y2="71.0" stroke="#00aa82" stroke-width="1.9"/><line x1="0.0" y1="86.0" x2="8.8" y2="86.0" stroke="#00aa5a" stroke-width="1.9"/><line x1="54.3" y1="86.0" x2="64.7" y2="86.0" stroke="#00b43c" stroke-width="1.9"/><line x1="0.0" y1="101.0" x2="8.8" y2="101.0" stroke="#00be1e" stroke-width="1.9"/><line x1="54.3" y1="101.0" x2="64.7" y2="101.0" stroke="#00c800" stroke-width="1.9"/><line x1="0.0" y1="116.0" x2="8.8" y2="116.0" stroke="#c8c800" stroke-width="1.9"/><line x1="54.3" y1="116.0" x2="64.7" y2="116.0" stroke="#c8b400" stroke-width="1.9"/><line x1="0.0" y1="131.0" x2="8.8" y2="131.0" stroke="#d2a000" stroke-width="1.9"/><line x1="54.3" y1="131.0" x2="64.7" y2="131.0" stroke="#d28c00" stroke-width="1.9"/><line x1="0.0" y1="146.0" x2="8.8" y2="146.0" stroke="#d27800" stroke-width="1.9"/><line x1="54.3" y1="146.0" x2="64.7" y2="146.0" stroke="#c86408" stroke-width="1.9"/><line x1="0.0" y1="161.0" x2="8.8" y2="161.0" stroke="#c8560c" stroke-width="1.9"/><line x1="54.3" y1="161.0" x2="64.7" y2="161.0" stroke="#be3c14" stroke-width="1.9"/><line x1="0.0" y1="176.0" x2="8.8" y2="176.0" stroke="#aa281e" stroke-width="1.9"/><line x1="54.3" y1="176.0" x2="64.7" y2="176.0" stroke="#a01414" stroke-width="1.9"/><line x1="0.0" y1="191.0" x2="8.8" y2="191.0" stroke="#0032e6" stroke-width="1.9"/><line x1="54.3" y1="191.0" x2="64.7" y2="191.0" stroke="#0070d0" stroke-width="1.9"/><line x1="0.0" y1="206.0" x2="8.8" y2="206.0" stroke="#0096c8" stroke-width="1.9"/><line x1="54.3" y1="206.0" x2="64.7" y2="206.0" stroke="#00aab4" stroke-width="1.9"/><line x1="0.0" y1="221.0" x2="8.8" y2="221.0" stroke="#00aa78" stroke-width="1.9"/><line x1="54.3" y1="221.0" x2="64.7" y2="221.0" stroke="#00af50" stroke-width="1.9"/><line x1="0.0" y1="236.0" x2="8.8" y2="236.0" stroke="#00b432" stroke-width="1.9"/><line x1="54.3" y1="236.0" x2="64.7" y2="236.0" stroke="#00be14" stroke-width="1.9"/><line x1="0.0" y1="251.0" x2="8.8" y2="251.0" stroke="#00c800" stroke-width="1.9"/><line x1="54.3" y1="251.0" x2="64.7" y2="251.0" stroke="#c8be00" stroke-width="1.9"/><line x1="0" y1="267.2" x2="8.8" y2="267.2" stroke="#0000ff" stroke-width="2.1"/><line x1="54.3" y1="267.0" x2="64.7" y2="267.0" stroke="#fff" stroke-width="2.5"/><line x1="0" y1="283.3" x2="8.8" y2="283.3" stroke="#00dc00" stroke-width="2.1"/>
</svg></div></body></html>
